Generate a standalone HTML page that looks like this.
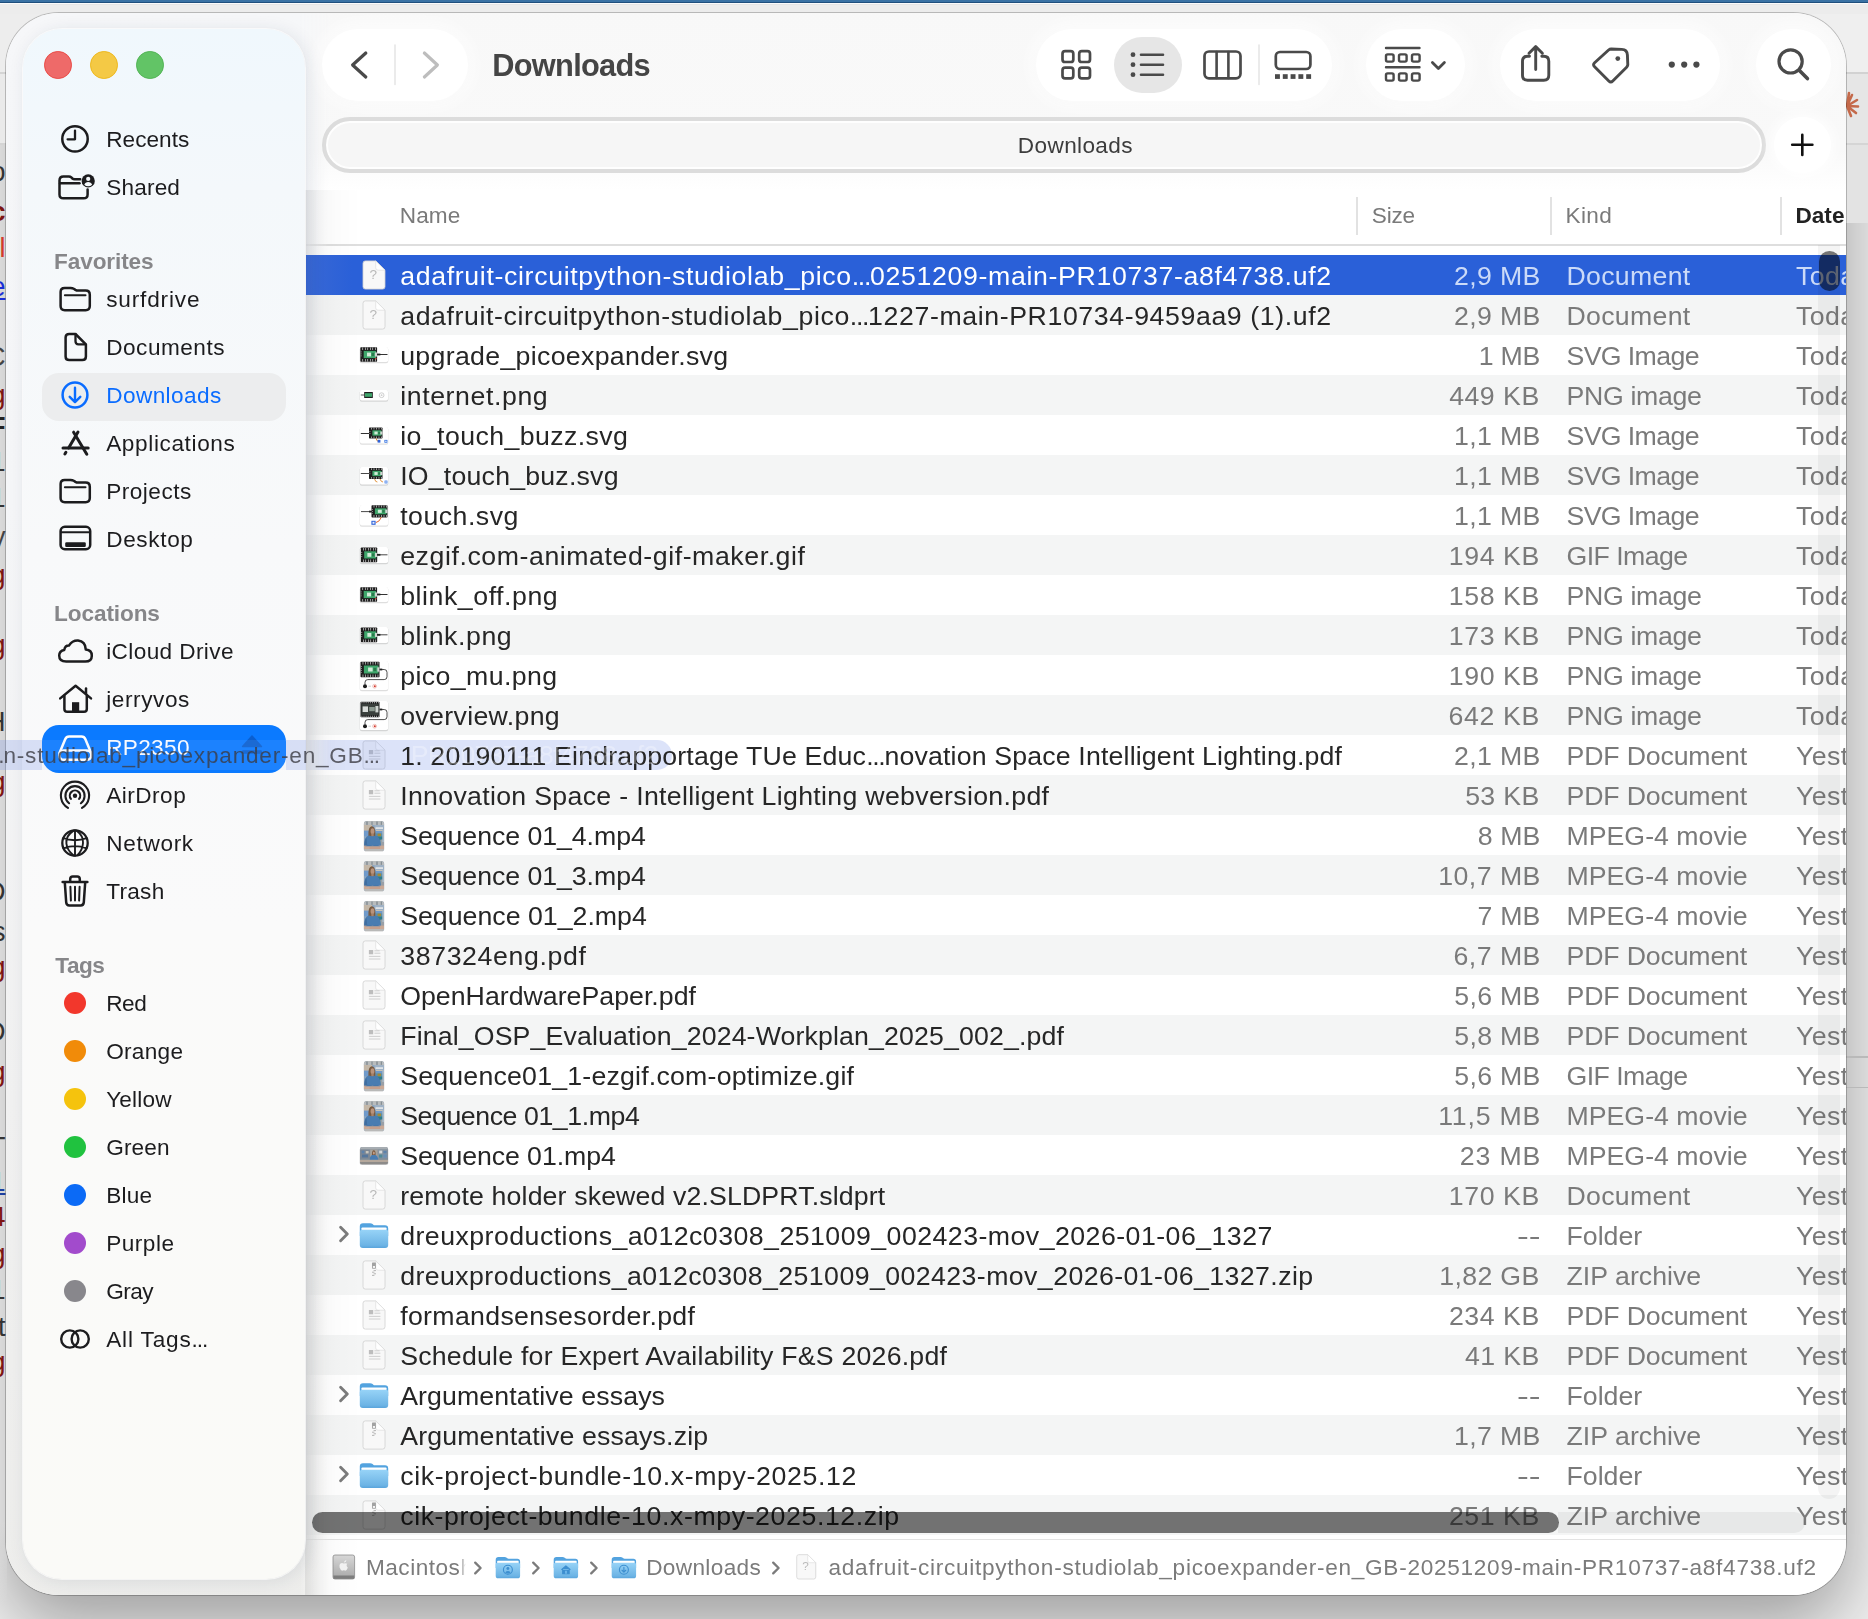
<!DOCTYPE html>
<html lang="en"><head><meta charset="utf-8"><title>Downloads</title>
<style>
html,body{margin:0;padding:0}
body{width:1868px;height:1619px;overflow:hidden;position:relative;background:#f0f0f0;font-family:'Liberation Sans',sans-serif}
.abs,.row,.selrow,.t,.fi,.si,.dot,.pill,.tb{position:absolute}
.t{white-space:pre;line-height:1;z-index:6}
.row{left:306px;width:1540px;height:40px;z-index:1}
.fi{z-index:5;line-height:0}
.si{left:55px;width:40px;height:40px;z-index:12;line-height:0}
.dot{left:64.300px;width:22px;height:22px;border-radius:50%;z-index:12}
.selrow{left:42px;width:244px;height:48px;border-radius:17px;z-index:11}
#win{z-index:1;position:absolute;left:6px;top:12.500px;width:1840px;height:1582.500px;border-radius:53px;overflow:hidden;background:#ffffff;box-shadow:0 0 0 1px rgba(0,0,0,0.22)}
#winshadow{position:absolute;left:6px;top:12.500px;width:1840px;height:1582.500px;border-radius:53px;box-shadow:0 30px 70px rgba(0,0,0,0.34)}
#pg{will-change:transform;position:absolute;left:-6px;top:-12.500px;width:1868px;height:1619px}
#tbbg{position:absolute;left:0;top:0;width:1868px;height:192px;background:linear-gradient(#f8f8f8 0,#f9f9f9 150px,#ffffff 190px);z-index:2}
#left{position:absolute;left:0;top:0;width:330px;height:1619px;background:linear-gradient(180deg,#f6f7f9 0,#f5f6f8 500px,#f1f1f1 1100px,#ededeb 1619px);-webkit-mask-image:linear-gradient(90deg,#000 300px,transparent 330px);mask-image:linear-gradient(90deg,#000 300px,transparent 330px);z-index:7}
#leftshade{position:absolute;left:305px;top:190px;width:57px;height:1429px;background:linear-gradient(90deg,rgba(0,0,0,0.075),rgba(0,0,0,0.03) 14px,rgba(0,0,0,0.012) 32px,rgba(0,0,0,0) 56px);z-index:7}
#leftshade2{position:absolute;left:306px;top:0;width:40px;height:190px;background:linear-gradient(90deg,rgba(20,40,70,0.032),rgba(0,0,0,0.010) 16px,rgba(0,0,0,0) 40px);z-index:7}
#sidebar{position:absolute;left:22.500px;top:29px;width:282.500px;height:1550px;border-radius:39px;z-index:10;background:linear-gradient(180deg,#f0f8fd 0,#f4f8fb 160px,#f8f9fa 520px,#fafafa 900px,#fafaf7 1550px);box-shadow:0 0 0 1px rgba(255,255,255,0.7),3px 2px 18px rgba(30,50,80,0.105),0 0 3px rgba(0,0,0,0.05)}
.tl{position:absolute;top:51px;width:25.600px;height:25.600px;border-radius:50%;border:1.200px solid;z-index:12}
.pill{background:#fff;border-radius:36px;z-index:8;box-shadow:0 0 18px 4px rgba(255,255,255,0.9),0 1px 10px rgba(0,0,0,0.035)}
.pathpill{position:absolute;left:322px;top:117px;width:1436px;height:48px;border-radius:28px;border:4px solid #dcdcdc;background:#f6f6f6;z-index:8;box-shadow:inset 0 0 0 2px rgba(255,255,255,0.85)}
.plus{position:absolute;left:1774px;top:116.700px;width:56.500px;height:56.500px;border-radius:50%;background:#fff;z-index:8;box-shadow:0 0 14px 3px rgba(255,255,255,0.9)}
.viewsel{position:absolute;left:1113.700px;top:36.700px;width:68.400px;height:56.200px;border-radius:28.100px;background:#e6e6e6;z-index:9}
.tb{left:0;top:0;z-index:12}
.hl{position:absolute;background:#dedede;z-index:3}
#vtrack{position:absolute;left:1818.200px;top:245px;width:21.800px;height:1253.500px;background:rgba(0,0,0,0.045);border-radius:0 0 11px 11px;z-index:8}
#vthumb{position:absolute;left:1819px;top:251px;width:20.600px;height:39.500px;border-radius:10.300px;background:rgba(0,0,0,0.52);z-index:9}
#htrack{position:absolute;left:1558px;top:1511.500px;width:247px;height:21px;background:rgba(0,0,0,0.05);border-radius:0 10.500px 10.500px 0;z-index:8}
#hthumb{position:absolute;left:312px;top:1511.500px;width:1247px;height:21px;border-radius:10.500px;background:rgba(0,0,0,0.535);z-index:9}
#pathbar{position:absolute;left:306px;top:1539px;width:1540px;height:58px;background:#fff;border-top:1.500px solid #e3e3e3;z-index:4}
#toplayer{position:absolute;left:0;top:0;width:1868px;height:1619px;z-index:50;will-change:transform;pointer-events:none}
.ghost{position:absolute;top:739.700px;height:30.600px;background:rgba(125,150,232,0.27)}
.bgt{position:absolute;white-space:pre;line-height:1}
</style></head>
<body>
<!-- desktop / background bits -->
<div class="abs" style="left:0;top:143px;width:7px;height:1476px;background:linear-gradient(180deg,#ffffff 0,#ffffff 1380px,#f0f0f0 1460px)"></div>
<div id="winshadow"></div>
<div class="abs" style="left:0;top:0;width:1868px;height:2.600px;background:#3a72a4"></div>
<div class="abs" style="left:0;top:2.200px;width:1868px;height:1px;background:#1f4f7d"></div>
<div class="abs" style="left:0;top:3.200px;width:1868px;height:1.300px;background:#fbfbfb"></div>
<div class="abs" style="left:0;top:4.500px;width:1868px;height:9px;background:#ececec"></div>
<div class="abs" style="left:0;top:100px;width:6.500px;height:1400px;overflow:hidden">
<span class="bgt" style="right:1px;top:59px;font-size:27px;color:#333;font-weight:400;">o</span>
<span class="bgt" style="right:1px;top:99px;font-size:27px;color:#7d1512;font-weight:700;">c</span>
<span class="bgt" style="right:1px;top:135px;font-size:27px;color:#d33a2c;font-weight:400;">l</span>
<span class="bgt" style="right:1px;top:174px;font-size:27px;color:#1b2fd6;font-weight:400;text-decoration:underline;">e</span>
<span class="bgt" style="right:1px;top:244px;font-size:27px;color:#444;font-weight:400;">C</span>
<span class="bgt" style="right:1px;top:282px;font-size:27px;color:#7d1512;font-weight:400;text-decoration:underline;">g</span>
<span class="bgt" style="right:1px;top:314px;font-size:27px;color:#222;font-weight:700;">F</span>
<span class="bgt" style="right:1px;top:349px;font-size:27px;color:#333;font-weight:400;">1</span>
<span class="bgt" style="right:1px;top:385px;font-size:27px;color:#333;font-weight:400;">1</span>
<span class="bgt" style="right:1px;top:424px;font-size:27px;color:#444;font-weight:400;">y</span>
<span class="bgt" style="right:1px;top:462px;font-size:27px;color:#7d1512;font-weight:400;text-decoration:underline;">g</span>
<span class="bgt" style="right:1px;top:532px;font-size:27px;color:#7d1512;font-weight:400;text-decoration:underline;">g</span>
<span class="bgt" style="right:1px;top:609px;font-size:27px;color:#333;font-weight:400;">H</span>
<span class="bgt" style="right:1px;top:669px;font-size:27px;color:#7d1512;font-weight:400;text-decoration:underline;">g</span>
<span class="bgt" style="right:1px;top:779px;font-size:27px;color:#333;font-weight:400;">D</span>
<span class="bgt" style="right:1px;top:819px;font-size:27px;color:#333;font-weight:400;">s</span>
<span class="bgt" style="right:1px;top:854px;font-size:27px;color:#7d1512;font-weight:400;text-decoration:underline;">g</span>
<span class="bgt" style="right:1px;top:919px;font-size:27px;color:#333;font-weight:400;">D</span>
<span class="bgt" style="right:1px;top:959px;font-size:27px;color:#7d1512;font-weight:400;text-decoration:underline;">g</span>
<span class="bgt" style="right:1px;top:1034px;font-size:27px;color:#333;font-weight:400;">T</span>
<span class="bgt" style="right:1px;top:1069px;font-size:27px;color:#1b3fa0;font-weight:400;text-decoration:underline;">1</span>
<span class="bgt" style="right:1px;top:1104px;font-size:27px;color:#7d1512;font-weight:400;">4</span>
<span class="bgt" style="right:1px;top:1141px;font-size:27px;color:#7d1512;font-weight:400;text-decoration:underline;">g</span>
<span class="bgt" style="right:1px;top:1177px;font-size:27px;color:#333;font-weight:400;">1</span>
<span class="bgt" style="right:1px;top:1214px;font-size:27px;color:#333;font-weight:400;">t</span>
<span class="bgt" style="right:1px;top:1249px;font-size:27px;color:#7d1512;font-weight:400;text-decoration:underline;">g</span>
</div>
<div class="abs" style="left:0;top:72px;width:8px;height:1.500px;background:#d4d4d4"></div>
<div class="abs" style="left:0;top:143px;width:8px;height:1.500px;background:#d4d4d4"></div>
<div class="abs" style="left:0;top:13.500px;width:60px;height:58.500px;background:#ededed"></div>
<div class="abs" style="left:0;top:73.500px;width:60px;height:69.500px;background:#eaeaea"></div>
<div class="abs" style="left:1780px;top:13.500px;width:88px;height:59px;background:#efefef"></div>
<div class="abs" style="left:1780px;top:72px;width:88px;height:1.500px;background:#d2d2d2"></div>
<div class="abs" style="left:1780px;top:73.500px;width:88px;height:70px;background:#e6e6e6"></div>
<div class="abs" style="left:1780px;top:143px;width:88px;height:1.500px;background:#d5d5d5"></div>
<div class="abs" style="left:1780px;top:144.500px;width:88px;height:78px;background:#e3e3e3"></div>
<div class="abs" style="left:1846px;top:1056px;width:22px;height:1.500px;background:#b9b9b9"></div>
<div class="abs" style="left:1846px;top:1086.500px;width:22px;height:1.500px;background:#b9b9b9"></div>
<svg class="abs" style="left:1838px;top:88px" width="30" height="36" viewBox="0 0 30 36" stroke="#c4694a" stroke-width="2.600" stroke-linecap="round"><path d="M9 18L19 12M9 18L20 18.500M9 18L18 25M9 18L13 28M9 18L14 7M9 18L11 5"/></svg>
<div id="win"><div id="pg">
<div id="tbbg"></div>
<div id="left"></div><div id="leftshade"></div><div class="abs" style="left:306px;top:255px;width:50px;height:40px;background:linear-gradient(90deg,#3968d4,#2a60d8 46px);z-index:7"></div>
<div class="hl" style="left:306px;top:244px;width:1540px;height:1.500px"></div>
<div class="hl" style="left:1356px;top:197px;width:1.500px;height:38px;background:#e2e2e2"></div>
<div class="hl" style="left:1550px;top:197px;width:1.500px;height:38px;background:#e2e2e2"></div>
<div class="hl" style="left:1780px;top:197px;width:1.500px;height:38px;background:#e2e2e2"></div>
<div class="row" style="top:255px;background:#2a60d8"></div>
<div class="fi" style="left:360.9px;top:259.0px"><svg width="26" height="32" viewBox="0 0 26 32"><path d="M4.600 2.600H15.200L23.600 11.000V27.600Q23.600 29.600 21.600 29.600H4.600Q2.600 29.600 2.600 27.600V4.600Q2.600 2.600 4.600 2.600Z" fill="#000" opacity="0.100"/><path d="M4.400 1.900H14.700L24.000 11.200V27.700Q24.000 30.100 21.600 30.100H4.400Q2.000 30.100 2.000 27.700V4.300Q2.000 1.900 4.400 1.900Z" fill="#f8f8f8" stroke="#d0d0d0" stroke-width="0.800"/><path d="M14.700 1.900V8.800Q14.700 11.200 17.100 11.200H24.000Z" fill="#ffffff" stroke="#dcdcdc" stroke-width="0.700" stroke-linejoin="round"/><text x="12.300" y="20.000" font-family="'Liberation Sans',sans-serif" font-size="13.600" fill="#b9b9b9" text-anchor="middle">?</text></svg></div>
<div class="row" style="top:295px;background:#f4f5f5"></div>
<div class="fi" style="left:360.9px;top:299.0px"><svg width="26" height="32" viewBox="0 0 26 32"><path d="M4.600 2.600H15.200L23.600 11.000V27.600Q23.600 29.600 21.600 29.600H4.600Q2.600 29.600 2.600 27.600V4.600Q2.600 2.600 4.600 2.600Z" fill="#000" opacity="0.100"/><path d="M4.400 1.900H14.700L24.000 11.200V27.700Q24.000 30.100 21.600 30.100H4.400Q2.000 30.100 2.000 27.700V4.300Q2.000 1.900 4.400 1.900Z" fill="#f8f8f8" stroke="#d0d0d0" stroke-width="0.800"/><path d="M14.700 1.900V8.800Q14.700 11.200 17.100 11.200H24.000Z" fill="#ffffff" stroke="#dcdcdc" stroke-width="0.700" stroke-linejoin="round"/><text x="12.300" y="20.000" font-family="'Liberation Sans',sans-serif" font-size="13.600" fill="#b9b9b9" text-anchor="middle">?</text></svg></div>
<div class="fi" style="left:359px;top:345.5px"><svg width="30" height="18" viewBox="-1 -1 30 18"><rect x="-0.3" y="0.300" width="28.6" height="15.9" rx="2.200" fill="#000" opacity="0.130"/><rect x="0" y="0" width="28" height="15" rx="1.800" fill="#ffffff"/><rect x="0.3" y="0.2" width="16.8" height="14.6" rx="0.7" fill="#1e1e1e"/><rect x="3.70" y="3.90" width="12.40" height="7.20" fill="#3fa66b"/><path d="M2.50 1.75H16.80M2.50 13.25H16.80" stroke="#ffffff" stroke-width="2.52" stroke-dasharray="0.55 1.95"/><path d="M1.20 4.70V10.30" stroke="#ffffff" stroke-width="1.000" stroke-dasharray="0.5 1.500"/><rect x="7.02" y="5.60" width="4.03" height="3.80" fill="#d3ecd9"/><rect x="11.72" y="6.04" width="2.35" height="2.92" fill="#2c7a4c"/><rect x="14.90" y="5.46" width="2.200" height="4.09" fill="#cfd6d1"/><path d="M17 7.500H27.500" stroke="#333" stroke-width="1.000"/><rect x="17" y="6.600" width="3.400" height="1.800" fill="#222"/><circle cx="15.800" cy="11.600" r="0.800" fill="#d9483a"/></svg></div>
<div class="row" style="top:375px;background:#f4f5f5"></div>
<div class="fi" style="left:359px;top:389.0px"><svg width="30" height="13.5" viewBox="-1 -1 30 13.5"><rect x="-0.3" y="0.300" width="28.6" height="11.4" rx="2.200" fill="#000" opacity="0.130"/><rect x="0" y="0" width="28" height="10.5" rx="1.800" fill="#ffffff"/><rect x="4.200" y="2.000" width="8.600" height="6.000" fill="#1f1f1f"/><rect x="5.000" y="3.200" width="7.000" height="3.600" fill="#3fa66b"/><path d="M0.800 5.000H4.200" stroke="#333" stroke-width="0.800"/><circle cx="21.600" cy="5.200" r="2.400" fill="none" stroke="#c9c9c9" stroke-width="0.900"/><circle cx="21.600" cy="5.200" r="0.900" fill="#cfcfcf"/></svg></div>
<div class="fi" style="left:359px;top:426.0px"><svg width="30" height="19.5" viewBox="-1 -1 30 19.5"><rect x="-0.3" y="0.300" width="28.6" height="17.4" rx="2.200" fill="#000" opacity="0.130"/><rect x="0" y="0" width="28" height="16.5" rx="1.800" fill="#ffffff"/><rect x="9.0" y="0.5" width="13.5" height="11" rx="0.7" fill="#1e1e1e"/><rect x="12.40" y="3.34" width="9.10" height="5.32" fill="#3fa66b"/><path d="M11.20 1.62H22.20M11.20 10.38H22.20" stroke="#ffffff" stroke-width="1.90" stroke-dasharray="0.55 1.95"/><path d="M9.90 4.14V7.86" stroke="#ffffff" stroke-width="1.000" stroke-dasharray="0.5 1.500"/><rect x="14.40" y="4.57" width="3.24" height="2.86" fill="#d3ecd9"/><rect x="18.18" y="4.90" width="1.89" height="2.20" fill="#2c7a4c"/><rect x="20.30" y="4.46" width="2.200" height="3.08" fill="#cfd6d1"/><path d="M0.800 6.500H9.000" stroke="#333" stroke-width="1.000"/><path d="M16.000 11.500Q17.000 15.000 19.500 14.600" stroke="#e08a2e" stroke-width="1.000" fill="none"/><rect x="17.600" y="12.800" width="2.800" height="2.800" fill="#2f62d9"/><rect x="24.400" y="12.900" width="3.000" height="2.800" fill="#2f6fe0"/><rect x="25.200" y="13.600" width="1.400" height="1.400" fill="#dfe9fb"/></svg></div>
<div class="row" style="top:455px;background:#f4f5f5"></div>
<div class="fi" style="left:359px;top:465.5px"><svg width="30" height="20.5" viewBox="-1 -1 30 20.5"><rect x="-0.3" y="0.300" width="28.6" height="18.4" rx="2.200" fill="#000" opacity="0.130"/><rect x="0" y="0" width="28" height="17.5" rx="1.800" fill="#ffffff"/><rect x="9.0" y="1.0" width="13.5" height="11" rx="0.7" fill="#1e1e1e"/><rect x="12.40" y="3.84" width="9.10" height="5.32" fill="#3fa66b"/><path d="M11.20 2.12H22.20M11.20 10.88H22.20" stroke="#ffffff" stroke-width="1.90" stroke-dasharray="0.55 1.95"/><path d="M9.90 4.64V8.36" stroke="#ffffff" stroke-width="1.000" stroke-dasharray="0.5 1.500"/><rect x="14.40" y="5.07" width="3.24" height="2.86" fill="#d3ecd9"/><rect x="18.18" y="5.40" width="1.89" height="2.20" fill="#2c7a4c"/><rect x="20.30" y="4.96" width="2.200" height="3.08" fill="#cfd6d1"/><path d="M0.800 6.500H9.000" stroke="#333" stroke-width="0.900"/><path d="M14.600 12.000Q15.400 15.200 17.400 15.000M20.000 12.000Q21.000 15.000 23.000 15.000" stroke="#e08a2e" stroke-width="0.900" fill="none"/><rect x="24.600" y="13.600" width="2.800" height="2.800" fill="#3b78e6"/><rect x="25.300" y="14.300" width="1.400" height="1.400" fill="#e4ecfb"/></svg></div>
<div class="fi" style="left:359px;top:504.0px"><svg width="30" height="23.5" viewBox="-1 -1 30 23.5"><rect x="-0.3" y="0.300" width="28.6" height="21.4" rx="2.200" fill="#000" opacity="0.130"/><rect x="0" y="0" width="28" height="20.5" rx="1.800" fill="#ffffff"/><rect x="11.5" y="0.2" width="16" height="12.2" rx="0.7" fill="#1e1e1e"/><rect x="14.90" y="3.33" width="11.60" height="5.94" fill="#3fa66b"/><path d="M13.70 1.46H27.20M13.70 11.14H27.20" stroke="#ffffff" stroke-width="2.11" stroke-dasharray="0.55 1.95"/><path d="M12.40 4.13V8.47" stroke="#ffffff" stroke-width="1.000" stroke-dasharray="0.5 1.500"/><rect x="17.90" y="4.71" width="3.84" height="3.17" fill="#d3ecd9"/><rect x="22.38" y="5.08" width="2.24" height="2.44" fill="#2c7a4c"/><rect x="25.30" y="4.59" width="2.200" height="3.42" fill="#cfd6d1"/><path d="M1.000 6.600H11.500" stroke="#333" stroke-width="0.900"/><rect x="9.000" y="5.700" width="2.800" height="1.800" fill="#222"/><path d="M21.500 12.000Q19.500 17.000 15.800 17.600" stroke="#e0662e" stroke-width="1.000" fill="none"/><rect x="11.400" y="15.800" width="4.200" height="4.000" fill="#2f62d9"/><rect x="12.500" y="16.800" width="2.000" height="1.900" fill="#e8effc"/></svg></div>
<div class="row" style="top:535px;background:#f4f5f5"></div>
<div class="fi" style="left:359px;top:546.2px"><svg width="30" height="19" viewBox="-1 -1 30 19"><rect x="-0.3" y="0.300" width="28.6" height="16.9" rx="2.200" fill="#000" opacity="0.130"/><rect x="0" y="0" width="28" height="16" rx="1.800" fill="#ffffff"/><rect x="0.8" y="0.6" width="16.4" height="14.6" rx="0.7" fill="#1e1e1e"/><rect x="4.20" y="4.30" width="12.00" height="7.20" fill="#3fa66b"/><path d="M3.00 2.15H16.90M3.00 13.65H16.90" stroke="#ffffff" stroke-width="2.52" stroke-dasharray="0.55 1.95"/><path d="M1.70 5.10V10.70" stroke="#ffffff" stroke-width="1.000" stroke-dasharray="0.5 1.500"/><rect x="7.36" y="6.00" width="3.94" height="3.80" fill="#d3ecd9"/><rect x="11.95" y="6.44" width="2.30" height="2.92" fill="#2c7a4c"/><rect x="15.00" y="5.86" width="2.200" height="4.09" fill="#cfd6d1"/><path d="M17.500 7.800H27.500" stroke="#333" stroke-width="0.900"/><rect x="17" y="6.900" width="3.400" height="1.800" fill="#222"/></svg></div>
<div class="fi" style="left:359px;top:585.5px"><svg width="30" height="18" viewBox="-1 -1 30 18"><rect x="-0.3" y="0.300" width="28.6" height="15.9" rx="2.200" fill="#000" opacity="0.130"/><rect x="0" y="0" width="28" height="15" rx="1.800" fill="#ffffff"/><rect x="0.3" y="0.2" width="16.8" height="14.6" rx="0.7" fill="#1e1e1e"/><rect x="3.70" y="3.90" width="12.40" height="7.20" fill="#3fa66b"/><path d="M2.50 1.75H16.80M2.50 13.25H16.80" stroke="#ffffff" stroke-width="2.52" stroke-dasharray="0.55 1.95"/><path d="M1.20 4.70V10.30" stroke="#ffffff" stroke-width="1.000" stroke-dasharray="0.5 1.500"/><rect x="7.02" y="5.60" width="4.03" height="3.80" fill="#d3ecd9"/><rect x="11.72" y="6.04" width="2.35" height="2.92" fill="#2c7a4c"/><rect x="14.90" y="5.46" width="2.200" height="4.09" fill="#cfd6d1"/><path d="M17 7.500H27.500" stroke="#333" stroke-width="1.000"/><rect x="17" y="6.600" width="3.400" height="1.800" fill="#222"/><circle cx="15.800" cy="11.600" r="0.800" fill="#d9483a"/></svg></div>
<div class="row" style="top:615px;background:#f4f5f5"></div>
<div class="fi" style="left:359px;top:626.2px"><svg width="30" height="19" viewBox="-1 -1 30 19"><rect x="-0.3" y="0.300" width="28.6" height="16.9" rx="2.200" fill="#000" opacity="0.130"/><rect x="0" y="0" width="28" height="16" rx="1.800" fill="#ffffff"/><rect x="0.8" y="0.6" width="16.4" height="14.6" rx="0.7" fill="#1e1e1e"/><rect x="4.20" y="4.30" width="12.00" height="7.20" fill="#3fa66b"/><path d="M3.00 2.15H16.90M3.00 13.65H16.90" stroke="#ffffff" stroke-width="2.52" stroke-dasharray="0.55 1.95"/><path d="M1.70 5.10V10.70" stroke="#ffffff" stroke-width="1.000" stroke-dasharray="0.5 1.500"/><rect x="7.36" y="6.00" width="3.94" height="3.80" fill="#d3ecd9"/><rect x="11.95" y="6.44" width="2.30" height="2.92" fill="#2c7a4c"/><rect x="15.00" y="5.86" width="2.200" height="4.09" fill="#cfd6d1"/><path d="M17.500 7.800H27.500" stroke="#333" stroke-width="0.900"/><rect x="17" y="6.900" width="3.400" height="1.800" fill="#222"/></svg></div>
<div class="fi" style="left:359px;top:659.5px"><svg width="30" height="32" viewBox="-1 -1 30 32"><rect x="-0.3" y="0.300" width="28.6" height="29.9" rx="2.200" fill="#000" opacity="0.130"/><rect x="0" y="0" width="28" height="29" rx="1.800" fill="#ffffff"/><rect x="0.5" y="0.8" width="19" height="15.4" rx="0.7" fill="#1e1e1e"/><rect x="3.90" y="4.50" width="14.60" height="8.00" fill="#3fa66b"/><path d="M2.70 2.35H19.20M2.70 14.65H19.20" stroke="#ffffff" stroke-width="2.52" stroke-dasharray="0.55 1.95"/><path d="M1.40 5.30V11.70" stroke="#ffffff" stroke-width="1.000" stroke-dasharray="0.5 1.500"/><rect x="8.10" y="6.50" width="4.56" height="4.00" fill="#d3ecd9"/><rect x="13.42" y="6.96" width="2.66" height="3.08" fill="#2c7a4c"/><rect x="17.30" y="6.34" width="2.200" height="4.31" fill="#cfd6d1"/><rect x="19.500" y="7.600" width="2.800" height="1.800" fill="#222"/><path d="M22.000 8.500H24.200Q27.000 8.500 27.000 11.300V15.800Q27.000 18.600 24.200 18.600H7.800Q5.000 18.600 5.000 21.400V23.600" stroke="#3a3a3a" stroke-width="0.900" fill="none"/><circle cx="5.000" cy="25.200" r="2.000" fill="#1c1c1c"/><circle cx="14.600" cy="25.200" r="1.900" fill="none" stroke="#e7a79f" stroke-width="0.700"/><circle cx="14.800" cy="25.200" r="1.000" fill="#d6372b"/><path d="M8.400 25.200H11.000" stroke="#bbb" stroke-width="0.700"/></svg></div>
<div class="row" style="top:695px;background:#f4f5f5"></div>
<div class="fi" style="left:359px;top:699.5px"><svg width="30" height="32" viewBox="-1 -1 30 32"><rect x="-0.3" y="0.300" width="28.6" height="29.9" rx="2.200" fill="#000" opacity="0.130"/><rect x="0" y="0" width="28" height="29" rx="1.800" fill="#ffffff"/><rect x="0.500" y="0.800" width="19" height="15.400" rx="0.800" fill="#1f1f1f"/><path d="M1.500 1.700H19M1.500 15.300H19" stroke="#e9e9e9" stroke-width="1.100" stroke-dasharray="0.8 1.300"/><rect x="1.300" y="3.000" width="17.400" height="11.000" fill="#3a3f3c"/><rect x="2.600" y="5.400" width="5.400" height="5.600" fill="#d9dcda"/><rect x="9.200" y="6.000" width="5.600" height="4.200" fill="#8d9a91"/><rect x="15.400" y="5.000" width="3.000" height="6.400" fill="#cfd4d0"/><rect x="19.500" y="7.600" width="2.800" height="1.800" fill="#222"/><path d="M22.000 8.500H24.200Q27.000 8.500 27.000 11.300V15.800Q27.000 18.600 24.200 18.600H7.800Q5.000 18.600 5.000 21.400V23.600" stroke="#3a3a3a" stroke-width="0.900" fill="none"/><circle cx="5.000" cy="25.200" r="2.000" fill="#1c1c1c"/><circle cx="14.600" cy="25.200" r="1.900" fill="none" stroke="#e7a79f" stroke-width="0.700"/><circle cx="14.800" cy="25.200" r="1.000" fill="#d6372b"/><path d="M8.400 25.200H11.000" stroke="#bbb" stroke-width="0.700"/></svg></div>
<div class="fi" style="left:360.7px;top:738.8px"><svg width="26" height="32" viewBox="0 0 26 32"><path d="M4.600 2.600H15.200L23.600 11.000V27.600Q23.600 29.600 21.600 29.600H4.600Q2.600 29.600 2.600 27.600V4.600Q2.600 2.600 4.600 2.600Z" fill="#000" opacity="0.100"/><path d="M4.400 1.900H14.700L24.000 11.200V27.700Q24.000 30.100 21.600 30.100H4.400Q2.000 30.100 2.000 27.700V4.300Q2.000 1.900 4.400 1.900Z" fill="#f8f8f8" stroke="#d0d0d0" stroke-width="0.800"/><path d="M14.700 1.900V8.800Q14.700 11.200 17.100 11.200H24.000Z" fill="#ffffff" stroke="#dcdcdc" stroke-width="0.700" stroke-linejoin="round"/><rect x="7.900" y="11.000" width="4.300" height="4.300" fill="#bdbdbd"/><path d="M13.400 11.800H18.600M13.400 14.200H19.400M7.900 17.400H19.400M7.900 20.000H19.400" stroke="#cbcbcb" stroke-width="0.900"/></svg></div>
<div class="row" style="top:775px;background:#f4f5f5"></div>
<div class="fi" style="left:360.7px;top:778.8px"><svg width="26" height="32" viewBox="0 0 26 32"><path d="M4.600 2.600H15.200L23.600 11.000V27.600Q23.600 29.600 21.600 29.600H4.600Q2.600 29.600 2.600 27.600V4.600Q2.600 2.600 4.600 2.600Z" fill="#000" opacity="0.100"/><path d="M4.400 1.900H14.700L24.000 11.200V27.700Q24.000 30.100 21.600 30.100H4.400Q2.000 30.100 2.000 27.700V4.300Q2.000 1.900 4.400 1.900Z" fill="#f8f8f8" stroke="#d0d0d0" stroke-width="0.800"/><path d="M14.700 1.900V8.800Q14.700 11.200 17.100 11.200H24.000Z" fill="#ffffff" stroke="#dcdcdc" stroke-width="0.700" stroke-linejoin="round"/><rect x="7.900" y="11.000" width="4.300" height="4.300" fill="#bdbdbd"/><path d="M13.400 11.800H18.600M13.400 14.200H19.400M7.900 17.400H19.400M7.900 20.000H19.400" stroke="#cbcbcb" stroke-width="0.900"/></svg></div>
<div class="fi" style="left:363px;top:819.9px"><svg width="22" height="32" viewBox="-1 -1 22 32"><defs><clipPath id="vp1"><rect x="0" y="0" width="20" height="30" rx="2.600"/></clipPath><filter id="vb1" x="-20%" y="-20%" width="140%" height="140%"><feGaussianBlur stdDeviation="0.550"/></filter></defs><rect x="-0.300" y="0.400" width="20.600" height="30.200" rx="2.800" fill="#000" opacity="0.200"/><g clip-path="url(#vp1)"><rect width="20" height="30" fill="#8aa3bd"/><g filter="url(#vb1)"><rect x="-1" y="-1" width="22" height="5.200" fill="#b9bcbd"/><rect x="2.500" y="0.500" width="1.000" height="3.400" fill="#6d7780"/><rect x="7.500" y="0.500" width="1.000" height="3.400" fill="#77818a"/><rect x="12.500" y="0.500" width="1.000" height="3.400" fill="#6d7780"/><rect x="16.800" y="0.500" width="1.000" height="3.400" fill="#7b858d"/><rect x="-1" y="4.000" width="9.000" height="6.000" fill="#c3b7a8"/><rect x="10.500" y="4.000" width="10.500" height="5.000" fill="#9fb2c6"/><rect x="11.500" y="6.200" width="7.500" height="1.800" fill="#dfe3e6"/><rect x="-1" y="9.600" width="22" height="5.600" fill="#6f9aca"/><rect x="12.000" y="9.000" width="9.000" height="1.000" fill="#c9c2b4"/><rect x="11.500" y="12.400" width="9.500" height="13.000" fill="#5d8fa5"/><rect x="13.600" y="12.600" width="3.400" height="2.600" fill="#a58a35"/><rect x="13.000" y="15.600" width="6.000" height="3.400" fill="#2f7c8c"/><rect x="16.500" y="18.500" width="4.000" height="7.000" fill="#9aa0a6"/><rect x="18.300" y="9.000" width="2.000" height="12.000" fill="#aab9c7"/><path d="M4.400 15.400Q4.000 5.400 7.800 5.300Q11.800 5.200 11.400 15.400Z" fill="#7a5a3f"/><ellipse cx="8.500" cy="10.200" rx="1.900" ry="3.000" fill="#b9937c"/><rect x="7.300" y="12.400" width="2.400" height="2.600" fill="#a8836d"/><path d="M0.200 26.000Q-0.200 15.600 5.000 14.600L8.300 15.600L11.400 14.600Q15.400 15.600 16.600 22.000L17.200 26.000Z" fill="#4a7cb1"/><path d="M0.300 25.500Q0.500 19.000 2.400 16.500L3.400 25.500Z" fill="#3f6d9f"/><rect x="-1" y="24.600" width="22" height="4.000" fill="#caa996"/><rect x="5.500" y="25.600" width="10.500" height="2.400" fill="#c49f8c"/><rect x="-1" y="28.000" width="22" height="3.000" fill="#b9b9b8"/><path d="M1.000 25.200Q5.000 22.800 8.500 24.600Q12.000 22.800 16.400 25.200Z" fill="#4577ac"/></g></g></svg></div>
<div class="row" style="top:855px;background:#f4f5f5"></div>
<div class="fi" style="left:363px;top:859.9px"><svg width="22" height="32" viewBox="-1 -1 22 32"><defs><clipPath id="vp2"><rect x="0" y="0" width="20" height="30" rx="2.600"/></clipPath><filter id="vb2" x="-20%" y="-20%" width="140%" height="140%"><feGaussianBlur stdDeviation="0.550"/></filter></defs><rect x="-0.300" y="0.400" width="20.600" height="30.200" rx="2.800" fill="#000" opacity="0.200"/><g clip-path="url(#vp2)"><rect width="20" height="30" fill="#8aa3bd"/><g filter="url(#vb2)"><rect x="-1" y="-1" width="22" height="5.200" fill="#b9bcbd"/><rect x="2.500" y="0.500" width="1.000" height="3.400" fill="#6d7780"/><rect x="7.500" y="0.500" width="1.000" height="3.400" fill="#77818a"/><rect x="12.500" y="0.500" width="1.000" height="3.400" fill="#6d7780"/><rect x="16.800" y="0.500" width="1.000" height="3.400" fill="#7b858d"/><rect x="-1" y="4.000" width="9.000" height="6.000" fill="#c3b7a8"/><rect x="10.500" y="4.000" width="10.500" height="5.000" fill="#9fb2c6"/><rect x="11.500" y="6.200" width="7.500" height="1.800" fill="#dfe3e6"/><rect x="-1" y="9.600" width="22" height="5.600" fill="#6f9aca"/><rect x="12.000" y="9.000" width="9.000" height="1.000" fill="#c9c2b4"/><rect x="11.500" y="12.400" width="9.500" height="13.000" fill="#5d8fa5"/><rect x="13.600" y="12.600" width="3.400" height="2.600" fill="#a58a35"/><rect x="13.000" y="15.600" width="6.000" height="3.400" fill="#2f7c8c"/><rect x="16.500" y="18.500" width="4.000" height="7.000" fill="#9aa0a6"/><rect x="18.300" y="9.000" width="2.000" height="12.000" fill="#aab9c7"/><path d="M4.400 15.400Q4.000 5.400 7.800 5.300Q11.800 5.200 11.400 15.400Z" fill="#7a5a3f"/><ellipse cx="8.500" cy="10.200" rx="1.900" ry="3.000" fill="#b9937c"/><rect x="7.300" y="12.400" width="2.400" height="2.600" fill="#a8836d"/><path d="M0.200 26.000Q-0.200 15.600 5.000 14.600L8.300 15.600L11.400 14.600Q15.400 15.600 16.600 22.000L17.200 26.000Z" fill="#4a7cb1"/><path d="M0.300 25.500Q0.500 19.000 2.400 16.500L3.400 25.500Z" fill="#3f6d9f"/><rect x="-1" y="24.600" width="22" height="4.000" fill="#caa996"/><rect x="5.500" y="25.600" width="10.500" height="2.400" fill="#c49f8c"/><rect x="-1" y="28.000" width="22" height="3.000" fill="#b9b9b8"/><path d="M1.000 25.200Q5.000 22.800 8.500 24.600Q12.000 22.800 16.400 25.200Z" fill="#4577ac"/></g></g></svg></div>
<div class="fi" style="left:363px;top:899.9px"><svg width="22" height="32" viewBox="-1 -1 22 32"><defs><clipPath id="vp3"><rect x="0" y="0" width="20" height="30" rx="2.600"/></clipPath><filter id="vb3" x="-20%" y="-20%" width="140%" height="140%"><feGaussianBlur stdDeviation="0.550"/></filter></defs><rect x="-0.300" y="0.400" width="20.600" height="30.200" rx="2.800" fill="#000" opacity="0.200"/><g clip-path="url(#vp3)"><rect width="20" height="30" fill="#8aa3bd"/><g filter="url(#vb3)"><rect x="-1" y="-1" width="22" height="5.200" fill="#b9bcbd"/><rect x="2.500" y="0.500" width="1.000" height="3.400" fill="#6d7780"/><rect x="7.500" y="0.500" width="1.000" height="3.400" fill="#77818a"/><rect x="12.500" y="0.500" width="1.000" height="3.400" fill="#6d7780"/><rect x="16.800" y="0.500" width="1.000" height="3.400" fill="#7b858d"/><rect x="-1" y="4.000" width="9.000" height="6.000" fill="#c3b7a8"/><rect x="10.500" y="4.000" width="10.500" height="5.000" fill="#9fb2c6"/><rect x="11.500" y="6.200" width="7.500" height="1.800" fill="#dfe3e6"/><rect x="-1" y="9.600" width="22" height="5.600" fill="#6f9aca"/><rect x="12.000" y="9.000" width="9.000" height="1.000" fill="#c9c2b4"/><rect x="11.500" y="12.400" width="9.500" height="13.000" fill="#5d8fa5"/><rect x="13.600" y="12.600" width="3.400" height="2.600" fill="#a58a35"/><rect x="13.000" y="15.600" width="6.000" height="3.400" fill="#2f7c8c"/><rect x="16.500" y="18.500" width="4.000" height="7.000" fill="#9aa0a6"/><rect x="18.300" y="9.000" width="2.000" height="12.000" fill="#aab9c7"/><path d="M4.400 15.400Q4.000 5.400 7.800 5.300Q11.800 5.200 11.400 15.400Z" fill="#7a5a3f"/><ellipse cx="8.500" cy="10.200" rx="1.900" ry="3.000" fill="#b9937c"/><rect x="7.300" y="12.400" width="2.400" height="2.600" fill="#a8836d"/><path d="M0.200 26.000Q-0.200 15.600 5.000 14.600L8.300 15.600L11.400 14.600Q15.400 15.600 16.600 22.000L17.200 26.000Z" fill="#4a7cb1"/><path d="M0.300 25.500Q0.500 19.000 2.400 16.500L3.400 25.500Z" fill="#3f6d9f"/><rect x="-1" y="24.600" width="22" height="4.000" fill="#caa996"/><rect x="5.500" y="25.600" width="10.500" height="2.400" fill="#c49f8c"/><rect x="-1" y="28.000" width="22" height="3.000" fill="#b9b9b8"/><path d="M1.000 25.200Q5.000 22.800 8.500 24.600Q12.000 22.800 16.400 25.200Z" fill="#4577ac"/></g></g></svg></div>
<div class="row" style="top:935px;background:#f4f5f5"></div>
<div class="fi" style="left:360.7px;top:938.8px"><svg width="26" height="32" viewBox="0 0 26 32"><path d="M4.600 2.600H15.200L23.600 11.000V27.600Q23.600 29.600 21.600 29.600H4.600Q2.600 29.600 2.600 27.600V4.600Q2.600 2.600 4.600 2.600Z" fill="#000" opacity="0.100"/><path d="M4.400 1.900H14.700L24.000 11.200V27.700Q24.000 30.100 21.600 30.100H4.400Q2.000 30.100 2.000 27.700V4.300Q2.000 1.900 4.400 1.900Z" fill="#f8f8f8" stroke="#d0d0d0" stroke-width="0.800"/><path d="M14.700 1.900V8.800Q14.700 11.200 17.100 11.200H24.000Z" fill="#ffffff" stroke="#dcdcdc" stroke-width="0.700" stroke-linejoin="round"/><rect x="7.900" y="11.000" width="4.300" height="4.300" fill="#bdbdbd"/><path d="M13.400 11.800H18.600M13.400 14.200H19.400M7.900 17.400H19.400M7.900 20.000H19.400" stroke="#cbcbcb" stroke-width="0.900"/></svg></div>
<div class="fi" style="left:360.7px;top:978.8px"><svg width="26" height="32" viewBox="0 0 26 32"><path d="M4.600 2.600H15.200L23.600 11.000V27.600Q23.600 29.600 21.600 29.600H4.600Q2.600 29.600 2.600 27.600V4.600Q2.600 2.600 4.600 2.600Z" fill="#000" opacity="0.100"/><path d="M4.400 1.900H14.700L24.000 11.200V27.700Q24.000 30.100 21.600 30.100H4.400Q2.000 30.100 2.000 27.700V4.300Q2.000 1.900 4.400 1.900Z" fill="#f8f8f8" stroke="#d0d0d0" stroke-width="0.800"/><path d="M14.700 1.900V8.800Q14.700 11.200 17.100 11.200H24.000Z" fill="#ffffff" stroke="#dcdcdc" stroke-width="0.700" stroke-linejoin="round"/><rect x="7.900" y="11.000" width="4.300" height="4.300" fill="#bdbdbd"/><path d="M13.400 11.800H18.600M13.400 14.200H19.400M7.900 17.400H19.400M7.900 20.000H19.400" stroke="#cbcbcb" stroke-width="0.900"/></svg></div>
<div class="row" style="top:1015px;background:#f4f5f5"></div>
<div class="fi" style="left:360.7px;top:1018.8px"><svg width="26" height="32" viewBox="0 0 26 32"><path d="M4.600 2.600H15.200L23.600 11.000V27.600Q23.600 29.600 21.600 29.600H4.600Q2.600 29.600 2.600 27.600V4.600Q2.600 2.600 4.600 2.600Z" fill="#000" opacity="0.100"/><path d="M4.400 1.900H14.700L24.000 11.200V27.700Q24.000 30.100 21.600 30.100H4.400Q2.000 30.100 2.000 27.700V4.300Q2.000 1.900 4.400 1.900Z" fill="#f8f8f8" stroke="#d0d0d0" stroke-width="0.800"/><path d="M14.700 1.900V8.800Q14.700 11.200 17.100 11.200H24.000Z" fill="#ffffff" stroke="#dcdcdc" stroke-width="0.700" stroke-linejoin="round"/><rect x="7.900" y="11.000" width="4.300" height="4.300" fill="#bdbdbd"/><path d="M13.400 11.800H18.600M13.400 14.200H19.400M7.900 17.400H19.400M7.900 20.000H19.400" stroke="#cbcbcb" stroke-width="0.900"/></svg></div>
<div class="fi" style="left:363px;top:1059.9px"><svg width="22" height="32" viewBox="-1 -1 22 32"><defs><clipPath id="vp4"><rect x="0" y="0" width="20" height="30" rx="2.600"/></clipPath><filter id="vb4" x="-20%" y="-20%" width="140%" height="140%"><feGaussianBlur stdDeviation="0.550"/></filter></defs><rect x="-0.300" y="0.400" width="20.600" height="30.200" rx="2.800" fill="#000" opacity="0.200"/><g clip-path="url(#vp4)"><rect width="20" height="30" fill="#8aa3bd"/><g filter="url(#vb4)"><rect x="-1" y="-1" width="22" height="5.200" fill="#b9bcbd"/><rect x="2.500" y="0.500" width="1.000" height="3.400" fill="#6d7780"/><rect x="7.500" y="0.500" width="1.000" height="3.400" fill="#77818a"/><rect x="12.500" y="0.500" width="1.000" height="3.400" fill="#6d7780"/><rect x="16.800" y="0.500" width="1.000" height="3.400" fill="#7b858d"/><rect x="-1" y="4.000" width="9.000" height="6.000" fill="#c3b7a8"/><rect x="10.500" y="4.000" width="10.500" height="5.000" fill="#9fb2c6"/><rect x="11.500" y="6.200" width="7.500" height="1.800" fill="#dfe3e6"/><rect x="-1" y="9.600" width="22" height="5.600" fill="#6f9aca"/><rect x="12.000" y="9.000" width="9.000" height="1.000" fill="#c9c2b4"/><rect x="11.500" y="12.400" width="9.500" height="13.000" fill="#5d8fa5"/><rect x="13.600" y="12.600" width="3.400" height="2.600" fill="#a58a35"/><rect x="13.000" y="15.600" width="6.000" height="3.400" fill="#2f7c8c"/><rect x="16.500" y="18.500" width="4.000" height="7.000" fill="#9aa0a6"/><rect x="18.300" y="9.000" width="2.000" height="12.000" fill="#aab9c7"/><path d="M4.400 15.400Q4.000 5.400 7.800 5.300Q11.800 5.200 11.400 15.400Z" fill="#7a5a3f"/><ellipse cx="8.500" cy="10.200" rx="1.900" ry="3.000" fill="#b9937c"/><rect x="7.300" y="12.400" width="2.400" height="2.600" fill="#a8836d"/><path d="M0.200 26.000Q-0.200 15.600 5.000 14.600L8.300 15.600L11.400 14.600Q15.400 15.600 16.600 22.000L17.200 26.000Z" fill="#4a7cb1"/><path d="M0.300 25.500Q0.500 19.000 2.400 16.500L3.400 25.500Z" fill="#3f6d9f"/><rect x="-1" y="24.600" width="22" height="4.000" fill="#caa996"/><rect x="5.500" y="25.600" width="10.500" height="2.400" fill="#c49f8c"/><rect x="-1" y="28.000" width="22" height="3.000" fill="#b9b9b8"/><path d="M1.000 25.200Q5.000 22.800 8.500 24.600Q12.000 22.800 16.400 25.200Z" fill="#4577ac"/></g></g></svg></div>
<div class="row" style="top:1095px;background:#f4f5f5"></div>
<div class="fi" style="left:363px;top:1099.9px"><svg width="22" height="32" viewBox="-1 -1 22 32"><defs><clipPath id="vp5"><rect x="0" y="0" width="20" height="30" rx="2.600"/></clipPath><filter id="vb5" x="-20%" y="-20%" width="140%" height="140%"><feGaussianBlur stdDeviation="0.550"/></filter></defs><rect x="-0.300" y="0.400" width="20.600" height="30.200" rx="2.800" fill="#000" opacity="0.200"/><g clip-path="url(#vp5)"><rect width="20" height="30" fill="#8aa3bd"/><g filter="url(#vb5)"><rect x="-1" y="-1" width="22" height="5.200" fill="#b9bcbd"/><rect x="2.500" y="0.500" width="1.000" height="3.400" fill="#6d7780"/><rect x="7.500" y="0.500" width="1.000" height="3.400" fill="#77818a"/><rect x="12.500" y="0.500" width="1.000" height="3.400" fill="#6d7780"/><rect x="16.800" y="0.500" width="1.000" height="3.400" fill="#7b858d"/><rect x="-1" y="4.000" width="9.000" height="6.000" fill="#c3b7a8"/><rect x="10.500" y="4.000" width="10.500" height="5.000" fill="#9fb2c6"/><rect x="11.500" y="6.200" width="7.500" height="1.800" fill="#dfe3e6"/><rect x="-1" y="9.600" width="22" height="5.600" fill="#6f9aca"/><rect x="12.000" y="9.000" width="9.000" height="1.000" fill="#c9c2b4"/><rect x="11.500" y="12.400" width="9.500" height="13.000" fill="#5d8fa5"/><rect x="13.600" y="12.600" width="3.400" height="2.600" fill="#a58a35"/><rect x="13.000" y="15.600" width="6.000" height="3.400" fill="#2f7c8c"/><rect x="16.500" y="18.500" width="4.000" height="7.000" fill="#9aa0a6"/><rect x="18.300" y="9.000" width="2.000" height="12.000" fill="#aab9c7"/><path d="M4.400 15.400Q4.000 5.400 7.800 5.300Q11.800 5.200 11.400 15.400Z" fill="#7a5a3f"/><ellipse cx="8.500" cy="10.200" rx="1.900" ry="3.000" fill="#b9937c"/><rect x="7.300" y="12.400" width="2.400" height="2.600" fill="#a8836d"/><path d="M0.200 26.000Q-0.200 15.600 5.000 14.600L8.300 15.600L11.400 14.600Q15.400 15.600 16.600 22.000L17.200 26.000Z" fill="#4a7cb1"/><path d="M0.300 25.500Q0.500 19.000 2.400 16.500L3.400 25.500Z" fill="#3f6d9f"/><rect x="-1" y="24.600" width="22" height="4.000" fill="#caa996"/><rect x="5.500" y="25.600" width="10.500" height="2.400" fill="#c49f8c"/><rect x="-1" y="28.000" width="22" height="3.000" fill="#b9b9b8"/><path d="M1.000 25.200Q5.000 22.800 8.500 24.600Q12.000 22.800 16.400 25.200Z" fill="#4577ac"/></g></g></svg></div>
<div class="fi" style="left:359px;top:1145.8px"><svg width="30" height="20" viewBox="-1 -1 30 20"><defs><clipPath id="vl1"><rect x="0" y="0" width="28" height="17.300" rx="2.400"/></clipPath><filter id="vlb" x="-20%" y="-20%" width="140%" height="140%"><feGaussianBlur stdDeviation="0.500"/></filter></defs><rect x="-0.300" y="0.400" width="28.600" height="17.600" rx="2.600" fill="#000" opacity="0.220"/><g clip-path="url(#vl1)"><rect width="28" height="17.300" fill="#7f8b98"/><g filter="url(#vlb)"><rect x="-1" y="-1" width="30" height="3.400" fill="#a7adb2"/><rect x="0.500" y="2.800" width="9.000" height="8.600" fill="#7d8793"/><rect x="1.600" y="3.600" width="2.800" height="2.800" fill="#5d82ab"/><rect x="5.800" y="4.000" width="2.800" height="2.400" fill="#c9c6bd"/><rect x="2.000" y="7.600" width="6.000" height="2.800" fill="#54779d"/><rect x="18.000" y="2.800" width="9.600" height="8.600" fill="#8794a1"/><rect x="19.200" y="3.600" width="3.000" height="2.800" fill="#d5d7d8"/><rect x="23.400" y="3.800" width="3.200" height="2.600" fill="#5d82ab"/><rect x="19.000" y="7.600" width="3.400" height="3.000" fill="#4f8a96"/><rect x="23.200" y="7.400" width="3.600" height="3.200" fill="#6a8fb5"/><rect x="10.200" y="2.600" width="7.400" height="8.000" fill="#a8a39b"/><path d="M11.900 8.600Q11.700 3.400 13.700 3.300Q15.900 3.300 15.600 8.600Z" fill="#7a5a3f"/><ellipse cx="13.800" cy="5.900" rx="1.000" ry="1.500" fill="#c19b84"/><path d="M9.800 13.600Q9.600 8.600 12.400 8.100H15.200Q18.000 8.600 18.200 13.600Z" fill="#4a7cb1"/><rect x="-1" y="12.800" width="30" height="2.600" fill="#b5a89c"/><rect x="-1" y="15.000" width="30" height="3.000" fill="#8d8b89"/></g></g></svg></div>
<div class="row" style="top:1175px;background:#f4f5f5"></div>
<div class="fi" style="left:360.9px;top:1179.0px"><svg width="26" height="32" viewBox="0 0 26 32"><path d="M4.600 2.600H15.200L23.600 11.000V27.600Q23.600 29.600 21.600 29.600H4.600Q2.600 29.600 2.600 27.600V4.600Q2.600 2.600 4.600 2.600Z" fill="#000" opacity="0.100"/><path d="M4.400 1.900H14.700L24.000 11.200V27.700Q24.000 30.100 21.600 30.100H4.400Q2.000 30.100 2.000 27.700V4.300Q2.000 1.900 4.400 1.900Z" fill="#f8f8f8" stroke="#d0d0d0" stroke-width="0.800"/><path d="M14.700 1.900V8.800Q14.700 11.200 17.100 11.200H24.000Z" fill="#ffffff" stroke="#dcdcdc" stroke-width="0.700" stroke-linejoin="round"/><text x="12.300" y="20.000" font-family="'Liberation Sans',sans-serif" font-size="13.600" fill="#b9b9b9" text-anchor="middle">?</text></svg></div>
<div class="fi" style="left:359.0px;top:1221.5px"><svg width="30" height="27" viewBox="0 0 30 27"><defs><linearGradient id="fgr1" x1="0" y1="0" x2="0" y2="1"><stop offset="0" stop-color="#97d3f7"/><stop offset="0.850" stop-color="#6db4e5"/><stop offset="1" stop-color="#5aa5dc"/></linearGradient></defs><path d="M0.800 4.400Q0.800 1.200 4.000 1.200H11.000Q12.600 1.200 13.600 2.100L14.300 2.700Q14.900 3.200 15.800 3.200H26.000Q29.200 3.200 29.200 6.400V14H0.800Z" fill="#53a3df"/><rect x="2.500" y="5.400" width="25" height="5" rx="0.900" fill="#ffffff"/><path d="M0.800 10.000Q0.800 7.800 3.000 7.800H27.000Q29.200 7.800 29.200 10.000V22.900Q29.200 25.900 26.200 25.900H3.800Q0.800 25.900 0.800 22.900Z" fill="url(#fgr1)"/></svg></div>
<svg class="fi" style="left:337px;top:1224.3px" width="14" height="20" viewBox="0 0 14 20" fill="none" stroke="#7b7b7b" stroke-width="2.900" stroke-linecap="round" stroke-linejoin="round"><path d="M3.600 3.300L10.300 10.000L3.600 16.700"/></svg>
<div class="row" style="top:1255px;background:#f4f5f5"></div>
<div class="fi" style="left:360.7px;top:1258.8px"><svg width="26" height="32" viewBox="0 0 26 32"><path d="M4.600 2.600H15.200L23.600 11.000V27.600Q23.600 29.600 21.600 29.600H4.600Q2.600 29.600 2.600 27.600V4.600Q2.600 2.600 4.600 2.600Z" fill="#000" opacity="0.100"/><path d="M4.400 1.900H14.700L24.000 11.200V27.700Q24.000 30.100 21.600 30.100H4.400Q2.000 30.100 2.000 27.700V4.300Q2.000 1.900 4.400 1.900Z" fill="#f8f8f8" stroke="#d0d0d0" stroke-width="0.800"/><path d="M14.700 1.900V8.800Q14.700 11.200 17.100 11.200H24.000Z" fill="#ffffff" stroke="#dcdcdc" stroke-width="0.700" stroke-linejoin="round"/><rect x="11.000" y="3.400" width="3.900" height="6.400" rx="0.700" fill="#a2a2a2"/><rect x="11.900" y="7.000" width="2.100" height="1.900" fill="#f6f6f6"/><path d="M12.600 11.600H15.000M11.000 13.200H13.400M12.600 14.800H15.000M11.000 16.400H13.400" stroke="#adadad" stroke-width="0.900"/></svg></div>
<div class="fi" style="left:360.7px;top:1298.8px"><svg width="26" height="32" viewBox="0 0 26 32"><path d="M4.600 2.600H15.200L23.600 11.000V27.600Q23.600 29.600 21.600 29.600H4.600Q2.600 29.600 2.600 27.600V4.600Q2.600 2.600 4.600 2.600Z" fill="#000" opacity="0.100"/><path d="M4.400 1.900H14.700L24.000 11.200V27.700Q24.000 30.100 21.600 30.100H4.400Q2.000 30.100 2.000 27.700V4.300Q2.000 1.900 4.400 1.900Z" fill="#f8f8f8" stroke="#d0d0d0" stroke-width="0.800"/><path d="M14.700 1.900V8.800Q14.700 11.200 17.100 11.200H24.000Z" fill="#ffffff" stroke="#dcdcdc" stroke-width="0.700" stroke-linejoin="round"/><rect x="7.900" y="11.000" width="4.300" height="4.300" fill="#bdbdbd"/><path d="M13.400 11.800H18.600M13.400 14.200H19.400M7.900 17.400H19.400M7.900 20.000H19.400" stroke="#cbcbcb" stroke-width="0.900"/></svg></div>
<div class="row" style="top:1335px;background:#f4f5f5"></div>
<div class="fi" style="left:360.7px;top:1338.8px"><svg width="26" height="32" viewBox="0 0 26 32"><path d="M4.600 2.600H15.200L23.600 11.000V27.600Q23.600 29.600 21.600 29.600H4.600Q2.600 29.600 2.600 27.600V4.600Q2.600 2.600 4.600 2.600Z" fill="#000" opacity="0.100"/><path d="M4.400 1.900H14.700L24.000 11.200V27.700Q24.000 30.100 21.600 30.100H4.400Q2.000 30.100 2.000 27.700V4.300Q2.000 1.900 4.400 1.900Z" fill="#f8f8f8" stroke="#d0d0d0" stroke-width="0.800"/><path d="M14.700 1.900V8.800Q14.700 11.200 17.100 11.200H24.000Z" fill="#ffffff" stroke="#dcdcdc" stroke-width="0.700" stroke-linejoin="round"/><rect x="7.900" y="11.000" width="4.300" height="4.300" fill="#bdbdbd"/><path d="M13.400 11.800H18.600M13.400 14.200H19.400M7.900 17.400H19.400M7.900 20.000H19.400" stroke="#cbcbcb" stroke-width="0.900"/></svg></div>
<div class="fi" style="left:359.0px;top:1381.5px"><svg width="30" height="27" viewBox="0 0 30 27"><defs><linearGradient id="fgr2" x1="0" y1="0" x2="0" y2="1"><stop offset="0" stop-color="#97d3f7"/><stop offset="0.850" stop-color="#6db4e5"/><stop offset="1" stop-color="#5aa5dc"/></linearGradient></defs><path d="M0.800 4.400Q0.800 1.200 4.000 1.200H11.000Q12.600 1.200 13.600 2.100L14.300 2.700Q14.900 3.200 15.800 3.200H26.000Q29.200 3.200 29.200 6.400V14H0.800Z" fill="#53a3df"/><rect x="2.500" y="5.400" width="25" height="5" rx="0.900" fill="#ffffff"/><path d="M0.800 10.000Q0.800 7.800 3.000 7.800H27.000Q29.200 7.800 29.200 10.000V22.900Q29.200 25.900 26.200 25.900H3.800Q0.800 25.900 0.800 22.900Z" fill="url(#fgr2)"/></svg></div>
<svg class="fi" style="left:337px;top:1384.3px" width="14" height="20" viewBox="0 0 14 20" fill="none" stroke="#7b7b7b" stroke-width="2.900" stroke-linecap="round" stroke-linejoin="round"><path d="M3.600 3.300L10.300 10.000L3.600 16.700"/></svg>
<div class="row" style="top:1415px;background:#f4f5f5"></div>
<div class="fi" style="left:360.7px;top:1418.8px"><svg width="26" height="32" viewBox="0 0 26 32"><path d="M4.600 2.600H15.200L23.600 11.000V27.600Q23.600 29.600 21.600 29.600H4.600Q2.600 29.600 2.600 27.600V4.600Q2.600 2.600 4.600 2.600Z" fill="#000" opacity="0.100"/><path d="M4.400 1.900H14.700L24.000 11.200V27.700Q24.000 30.100 21.600 30.100H4.400Q2.000 30.100 2.000 27.700V4.300Q2.000 1.900 4.400 1.900Z" fill="#f8f8f8" stroke="#d0d0d0" stroke-width="0.800"/><path d="M14.700 1.900V8.800Q14.700 11.200 17.100 11.200H24.000Z" fill="#ffffff" stroke="#dcdcdc" stroke-width="0.700" stroke-linejoin="round"/><rect x="11.000" y="3.400" width="3.900" height="6.400" rx="0.700" fill="#a2a2a2"/><rect x="11.900" y="7.000" width="2.100" height="1.900" fill="#f6f6f6"/><path d="M12.600 11.600H15.000M11.000 13.200H13.400M12.600 14.800H15.000M11.000 16.400H13.400" stroke="#adadad" stroke-width="0.900"/></svg></div>
<div class="fi" style="left:359.0px;top:1461.5px"><svg width="30" height="27" viewBox="0 0 30 27"><defs><linearGradient id="fgr3" x1="0" y1="0" x2="0" y2="1"><stop offset="0" stop-color="#97d3f7"/><stop offset="0.850" stop-color="#6db4e5"/><stop offset="1" stop-color="#5aa5dc"/></linearGradient></defs><path d="M0.800 4.400Q0.800 1.200 4.000 1.200H11.000Q12.600 1.200 13.600 2.100L14.300 2.700Q14.900 3.200 15.800 3.200H26.000Q29.200 3.200 29.200 6.400V14H0.800Z" fill="#53a3df"/><rect x="2.500" y="5.400" width="25" height="5" rx="0.900" fill="#ffffff"/><path d="M0.800 10.000Q0.800 7.800 3.000 7.800H27.000Q29.200 7.800 29.200 10.000V22.900Q29.200 25.900 26.200 25.900H3.800Q0.800 25.900 0.800 22.900Z" fill="url(#fgr3)"/></svg></div>
<svg class="fi" style="left:337px;top:1464.3px" width="14" height="20" viewBox="0 0 14 20" fill="none" stroke="#7b7b7b" stroke-width="2.900" stroke-linecap="round" stroke-linejoin="round"><path d="M3.600 3.300L10.300 10.000L3.600 16.700"/></svg>
<div class="row" style="top:1495px;background:#f4f5f5"></div>
<div class="fi" style="left:360.7px;top:1498.8px"><svg width="26" height="32" viewBox="0 0 26 32"><path d="M4.600 2.600H15.200L23.600 11.000V27.600Q23.600 29.600 21.600 29.600H4.600Q2.600 29.600 2.600 27.600V4.600Q2.600 2.600 4.600 2.600Z" fill="#000" opacity="0.100"/><path d="M4.400 1.900H14.700L24.000 11.200V27.700Q24.000 30.100 21.600 30.100H4.400Q2.000 30.100 2.000 27.700V4.300Q2.000 1.900 4.400 1.900Z" fill="#f8f8f8" stroke="#d0d0d0" stroke-width="0.800"/><path d="M14.700 1.900V8.800Q14.700 11.200 17.100 11.200H24.000Z" fill="#ffffff" stroke="#dcdcdc" stroke-width="0.700" stroke-linejoin="round"/><rect x="11.000" y="3.400" width="3.900" height="6.400" rx="0.700" fill="#a2a2a2"/><rect x="11.900" y="7.000" width="2.100" height="1.900" fill="#f6f6f6"/><path d="M12.600 11.600H15.000M11.000 13.200H13.400M12.600 14.800H15.000M11.000 16.400H13.400" stroke="#adadad" stroke-width="0.900"/></svg></div>
<div class="ghost" style="left:306px;width:365.600px;border-radius:0 15.300px 15.300px 0;z-index:5"></div>
<div class="si" style="top:119px;color:#1c1c1e"><svg width="40" height="40" viewBox="0 0 40 40" fill="none" stroke="currentColor" stroke-width="2.5" stroke-linecap="round" stroke-linejoin="round"><circle cx="20" cy="19.900" r="12.700"/><path d="M20 11.600V20.300H12.600" stroke-width="2.300"/></svg></div>
<div class="si" style="top:167px;color:#1c1c1e"><svg width="40" height="40" viewBox="0 0 40 40" fill="none" stroke="currentColor" stroke-width="2.5" stroke-linecap="round" stroke-linejoin="round"><path d="M25.200 12.300H19.600Q18.300 12.300 17.400 11.500L16.300 10.400Q15.300 9.500 13.900 9.500H8.400Q4.500 9.500 4.500 13.400V27.400Q4.500 31.300 8.400 31.300H28.700Q32.600 31.300 32.600 27.400V22.400"/><path d="M5.200 16.200H24.500"/><circle cx="33.200" cy="13.900" r="6.600" fill="currentColor" stroke="none"/><circle cx="33.200" cy="11.900" r="2.100" fill="#f4f8fb" stroke="none"/><path d="M29.300 17.700Q30.300 14.900 33.200 14.900Q36.100 14.900 37.100 17.700Q35.500 19.300 33.200 19.300Q30.900 19.300 29.300 17.700Z" fill="#f4f8fb" stroke="none"/></svg></div>
<div class="si" style="top:279px;color:#1c1c1e"><svg width="40" height="40" viewBox="0 0 40 40" fill="none" stroke="currentColor" stroke-width="2.5" stroke-linecap="round" stroke-linejoin="round"><path d="M5.600 13.000Q5.600 8.900 9.700 8.900H15.600Q17.300 8.900 18.700 9.800L20.400 10.900Q21.600 11.600 23.200 11.600H30.600Q34.800 11.600 34.800 15.800V27.000Q34.800 31.200 30.600 31.200H9.800Q5.600 31.200 5.600 27.000Z"/><path d="M9.900 16.300H30.500" stroke-width="2.000"/></svg></div>
<div class="si" style="top:327px;color:#1c1c1e"><svg width="40" height="40" viewBox="0 0 40 40" fill="none" stroke="currentColor" stroke-width="2.5" stroke-linecap="round" stroke-linejoin="round"><path d="M14.200 7.000H20.500L30.900 17.300V29.400Q30.900 33.000 27.300 33.000H14.200Q10.600 33.000 10.600 29.400V10.600Q10.600 7.000 14.200 7.000Z"/><path d="M20.500 7.400V14.300Q20.500 17.300 23.500 17.300H30.500" stroke-width="2.300"/></svg></div>
<div class="selrow" style="top:373px;background:#ecedee"></div>
<div class="si" style="top:375px;color:#0a6cff"><svg width="40" height="40" viewBox="0 0 40 40" fill="none" stroke="currentColor" stroke-width="2.5" stroke-linecap="round" stroke-linejoin="round"><circle cx="20" cy="20" r="12.400"/><path d="M20 12.800V26.800M14.700 21.800L20 27.100L25.300 21.800" stroke-width="2.400"/></svg></div>
<div class="si" style="top:423px;color:#1c1c1e"><svg width="40" height="40" viewBox="0 0 40 40" fill="none" stroke="currentColor" stroke-width="3.0" stroke-linecap="round" stroke-linejoin="round"><path d="M8.000 25.000H33.200"/><path d="M23.000 9.000L13.600 25.000"/><path d="M18.600 9.200L31.800 31.200"/><path d="M10.900 29.300L9.900 31.000"/></svg></div>
<div class="si" style="top:471px;color:#1c1c1e"><svg width="40" height="40" viewBox="0 0 40 40" fill="none" stroke="currentColor" stroke-width="2.5" stroke-linecap="round" stroke-linejoin="round"><path d="M5.600 13.000Q5.600 8.900 9.700 8.900H15.600Q17.300 8.900 18.700 9.800L20.400 10.900Q21.600 11.600 23.200 11.600H30.600Q34.800 11.600 34.800 15.800V27.000Q34.800 31.200 30.600 31.200H9.800Q5.600 31.200 5.600 27.000Z"/><path d="M9.900 16.300H30.500" stroke-width="2.000"/></svg></div>
<div class="si" style="top:519px;color:#1c1c1e"><svg width="40" height="40" viewBox="0 0 40 40" fill="none" stroke="currentColor" stroke-width="2.5" stroke-linecap="round" stroke-linejoin="round"><rect x="5.600" y="7.800" width="29.600" height="22.400" rx="4.200"/><path d="M6.300 13.300H34.500" stroke-width="2"/><rect x="10.200" y="23.300" width="20.600" height="4.800" rx="1.300" fill="currentColor" stroke="none"/></svg></div>
<div class="si" style="top:631px;color:#1c1c1e"><svg width="40" height="40" viewBox="0 0 40 40" fill="none" stroke="currentColor" stroke-width="2.5" stroke-linecap="round" stroke-linejoin="round"><path d="M11.2 30.600Q4.200 30.600 4.200 24.600Q4.200 19.800 9.300 18.900Q10.100 14.500 13.900 14.600Q17.200 9.400 23.000 9.600Q30.400 10.200 30.800 18.600Q36.800 19.000 36.800 24.700Q36.800 30.600 30.200 30.600Z"/></svg></div>
<div class="si" style="top:679px;color:#1c1c1e"><svg width="40" height="40" viewBox="0 0 40 40" fill="none" stroke="currentColor" stroke-width="2.5" stroke-linecap="round" stroke-linejoin="round"><path d="M5.200 19.400L20.600 6.800L36.000 19.400"/><path d="M9.400 16.800V30.000Q9.400 32.800 12.200 32.800H29.000Q31.800 32.800 31.800 30.000V16.800"/><path d="M31.000 14.200V9.400"/><rect x="17.000" y="23.200" width="7.200" height="9.600" fill="currentColor" stroke="none"/></svg></div>
<div class="selrow" style="top:725px;background:#0b7aff"></div>
<div class="si" style="top:727px;color:#ffffff"><svg width="40" height="40" viewBox="0 0 40 40" fill="none" stroke="currentColor" stroke-width="2.5" stroke-linecap="round" stroke-linejoin="round"><path d="M4.600 25.800L10.200 12.200Q11.300 9.600 14.100 9.600H26.500Q29.300 9.600 30.400 12.200L36.000 25.800"/><rect x="4.400" y="23.400" width="31.800" height="9.400" rx="4.200"/></svg></div>
<svg class="fi" style="z-index:13;left:240px;top:733px" width="24" height="26" viewBox="0 0 24 26"><path d="M12 3.000L21.400 13.600H2.600Z" fill="#0a5fd0" stroke="#0a5fd0" stroke-width="1.500" stroke-linejoin="round"/><rect x="2" y="17.200" width="20" height="3.600" rx="1.200" fill="#0a5fd0"/></svg>
<div class="si" style="top:775px;color:#1c1c1e"><svg width="40" height="40" viewBox="0 0 40 40" fill="none" stroke="currentColor" stroke-width="2.5" stroke-linecap="round" stroke-linejoin="round"><circle cx="20" cy="20.700" r="2.200" fill="currentColor" stroke="none"/><path d="M12.95 32.91A14.1 14.1 0 1 1 27.05 32.91M14.09 28.26A9.6 9.6 0 1 1 25.91 28.26M15.90 23.90A5.2 5.2 0 1 1 24.10 23.90" stroke-width="2.100"/></svg></div>
<div class="si" style="top:823px;color:#1c1c1e"><svg width="40" height="40" viewBox="0 0 40 40" fill="none" stroke="currentColor" stroke-width="2.3" stroke-linecap="round" stroke-linejoin="round"><circle cx="20" cy="20" r="12.700"/><path d="M20 7.300V32.700M8.200 15.200Q20 19.400 31.800 15.200M8.400 25.400Q20 20.800 31.600 25.400M18.600 7.600Q10.400 13.000 11.400 20.600Q12.200 27.400 18.600 32.400M21.400 7.600Q28.600 13.000 28.000 20.000Q27.600 27.000 22.600 32.000" stroke-width="1.900"/></svg></div>
<div class="si" style="top:871px;color:#1c1c1e"><svg width="40" height="40" viewBox="0 0 40 40" fill="none" stroke="currentColor" stroke-width="2.5" stroke-linecap="round" stroke-linejoin="round"><path d="M7.600 11.000H32.400"/><path d="M15.200 10.600V8.200Q15.200 5.600 17.800 5.600H22.200Q24.800 5.600 24.800 8.200V10.600"/><path d="M9.800 11.400L11.200 31.400Q11.400 34.400 14.400 34.400H25.600Q28.600 34.400 28.800 31.400L30.200 11.400"/><path d="M15.400 15.800L15.900 29.600M20 15.800V29.600M24.600 15.800L24.100 29.600" stroke-width="2"/></svg></div>
<div class="dot" style="top:992px;background:#f2372c"></div>
<div class="dot" style="top:1040px;background:#f18b09"></div>
<div class="dot" style="top:1088px;background:#f5c30d"></div>
<div class="dot" style="top:1136px;background:#20c23f"></div>
<div class="dot" style="top:1184px;background:#0b6af6"></div>
<div class="dot" style="top:1232px;background:#a24bcc"></div>
<div class="dot" style="top:1280px;background:#88878c"></div>
<div class="si" style="top:1319px;color:#1c1c1e"><svg width="40" height="40" viewBox="0 0 40 40" fill="none" stroke="currentColor" stroke-width="2.4" stroke-linecap="round" stroke-linejoin="round"><circle cx="14.800" cy="20" r="8.600"/><circle cx="25.200" cy="20" r="8.600"/></svg></div>
<div id="vtrack"></div><div id="vthumb"></div>
<div id="htrack"></div><div id="hthumb"></div>
<div id="pathbar"></div>
<svg class="fi" style="left:332px;top:1554px" width="24" height="27" viewBox="0 0 24 27"><defs><linearGradient id="dk" x1="0" y1="0" x2="0" y2="1"><stop offset="0" stop-color="#d9d9d9"/><stop offset="1" stop-color="#a9a9a9"/></linearGradient></defs><rect x="1" y="1" width="21.600" height="24" rx="2" fill="url(#dk)" stroke="#8d8d8d" stroke-width="0.800"/><rect x="1.400" y="21.500" width="20.800" height="3.300" fill="#7e7e7e"/><path d="M11.800 8.200Q12.800 6.200 14.400 6.000Q14.400 8.000 12.400 8.600ZM8.400 9.600Q10.000 8.600 11.800 9.600Q13.800 8.600 15.400 9.800Q13.600 11.400 15.800 13.800Q14.600 17.000 13.000 16.600Q11.800 16.000 10.600 16.600Q8.800 17.000 7.600 13.600Q7.000 10.800 8.400 9.600Z" fill="#f3f3f3"/></svg>
<svg class="fi" style="left:472.5px;top:1560px" width="10" height="16" viewBox="0 0 10 16" fill="none" stroke="#7b7b7b" stroke-width="2.300" stroke-linecap="round" stroke-linejoin="round"><path d="M2.200 2.600L7.600 8.000L2.200 13.400"/></svg>
<svg class="fi" style="left:531px;top:1560px" width="10" height="16" viewBox="0 0 10 16" fill="none" stroke="#7b7b7b" stroke-width="2.300" stroke-linecap="round" stroke-linejoin="round"><path d="M2.200 2.600L7.600 8.000L2.200 13.400"/></svg>
<svg class="fi" style="left:589px;top:1560px" width="10" height="16" viewBox="0 0 10 16" fill="none" stroke="#7b7b7b" stroke-width="2.300" stroke-linecap="round" stroke-linejoin="round"><path d="M2.200 2.600L7.600 8.000L2.200 13.400"/></svg>
<svg class="fi" style="left:770.5px;top:1560px" width="10" height="16" viewBox="0 0 10 16" fill="none" stroke="#7b7b7b" stroke-width="2.300" stroke-linecap="round" stroke-linejoin="round"><path d="M2.200 2.600L7.600 8.000L2.200 13.400"/></svg>
<div class="fi" style="left:495px;top:1555.500px"><svg width="25.8" height="23.2" viewBox="0 0 30 27"><defs><linearGradient id="fgp0" x1="0" y1="0" x2="0" y2="1"><stop offset="0" stop-color="#97d3f7"/><stop offset="0.850" stop-color="#6db4e5"/><stop offset="1" stop-color="#5aa5dc"/></linearGradient></defs><path d="M0.800 4.400Q0.800 1.200 4.000 1.200H11.000Q12.600 1.200 13.600 2.100L14.300 2.700Q14.900 3.200 15.800 3.200H26.000Q29.200 3.200 29.200 6.400V14H0.800Z" fill="#53a3df"/><rect x="2.500" y="5.400" width="25" height="5" rx="0.900" fill="#ffffff"/><path d="M0.800 10.000Q0.800 7.800 3.000 7.800H27.000Q29.200 7.800 29.200 10.000V22.900Q29.200 25.900 26.200 25.900H3.800Q0.800 25.900 0.800 22.900Z" fill="url(#fgp0)"/><circle cx="15" cy="16" r="5.200" fill="none" stroke="#3d8fd0" stroke-width="1.300"/><circle cx="15" cy="14.600" r="1.700" fill="#3d8fd0"/><path d="M11.800 19.200Q15 15.800 18.200 19.200Q15 21.600 11.800 19.200Z" fill="#3d8fd0"/></svg></div>
<div class="fi" style="left:553px;top:1555.500px"><svg width="25.8" height="23.2" viewBox="0 0 30 27"><defs><linearGradient id="fgp1" x1="0" y1="0" x2="0" y2="1"><stop offset="0" stop-color="#97d3f7"/><stop offset="0.850" stop-color="#6db4e5"/><stop offset="1" stop-color="#5aa5dc"/></linearGradient></defs><path d="M0.800 4.400Q0.800 1.200 4.000 1.200H11.000Q12.600 1.200 13.600 2.100L14.300 2.700Q14.900 3.200 15.800 3.200H26.000Q29.200 3.200 29.200 6.400V14H0.800Z" fill="#53a3df"/><rect x="2.500" y="5.400" width="25" height="5" rx="0.900" fill="#ffffff"/><path d="M0.800 10.000Q0.800 7.800 3.000 7.800H27.000Q29.200 7.800 29.200 10.000V22.900Q29.200 25.900 26.200 25.900H3.800Q0.800 25.900 0.800 22.900Z" fill="url(#fgp1)"/><path d="M9.800 16.000L15 11.400L20.200 16.000M11.200 15.200V20.600H18.800V15.200" fill="#3d8fd0" stroke="#3d8fd0" stroke-width="1.200" stroke-linejoin="round"/><rect x="14" y="17.200" width="2.200" height="3.400" fill="#6db6ea"/></svg></div>
<div class="fi" style="left:611px;top:1555.500px"><svg width="25.8" height="23.2" viewBox="0 0 30 27"><defs><linearGradient id="fgp2" x1="0" y1="0" x2="0" y2="1"><stop offset="0" stop-color="#97d3f7"/><stop offset="0.850" stop-color="#6db4e5"/><stop offset="1" stop-color="#5aa5dc"/></linearGradient></defs><path d="M0.800 4.400Q0.800 1.200 4.000 1.200H11.000Q12.600 1.200 13.600 2.100L14.300 2.700Q14.900 3.200 15.800 3.200H26.000Q29.200 3.200 29.200 6.400V14H0.800Z" fill="#53a3df"/><rect x="2.500" y="5.400" width="25" height="5" rx="0.900" fill="#ffffff"/><path d="M0.800 10.000Q0.800 7.800 3.000 7.800H27.000Q29.200 7.800 29.200 10.000V22.900Q29.200 25.900 26.200 25.900H3.800Q0.800 25.900 0.800 22.900Z" fill="url(#fgp2)"/><circle cx="15" cy="16" r="5.200" fill="none" stroke="#3d8fd0" stroke-width="1.300"/><path d="M15 13.200V18.600M12.800 16.600L15 18.800L17.200 16.600" fill="none" stroke="#3d8fd0" stroke-width="1.300" stroke-linecap="round" stroke-linejoin="round"/></svg></div>
<div class="fi" style="left:795px;top:1553px"><svg width="22.500" height="27.700" viewBox="0 0 26 32"><path d="M4.600 2.600H15.200L23.600 11.000V27.600Q23.600 29.600 21.600 29.600H4.600Q2.600 29.600 2.600 27.600V4.600Q2.600 2.600 4.600 2.600Z" fill="#000" opacity="0.100"/><path d="M4.400 1.900H14.700L24.000 11.200V27.700Q24.000 30.100 21.600 30.100H4.400Q2.000 30.100 2.000 27.700V4.300Q2.000 1.900 4.400 1.900Z" fill="#f8f8f8" stroke="#d0d0d0" stroke-width="0.800"/><path d="M14.700 1.900V8.800Q14.700 11.200 17.100 11.200H24.000Z" fill="#ffffff" stroke="#dcdcdc" stroke-width="0.700" stroke-linejoin="round"/><text x="12.300" y="20.000" font-family="'Liberation Sans',sans-serif" font-size="13.600" fill="#b9b9b9" text-anchor="middle">?</text></svg></div>
<div id="sidebar"></div>
<div class="tl" style="left:44px;background:#ee6a69;border-color:#ea4a45"></div>
<div class="tl" style="left:90px;background:#f4c945;border-color:#eeb81c"></div>
<div class="tl" style="left:136px;background:#62c466;border-color:#52b455"></div>
<div class="pill" style="left:322px;top:29px;width:146px;height:72px"></div><div class="pill" style="left:1036px;top:29px;width:296px;height:72px"></div><div class="pill" style="left:1365.5px;top:29px;width:99px;height:72px"></div><div class="pill" style="left:1500px;top:29px;width:220px;height:72px"></div><div class="pill" style="left:1756px;top:29px;width:75px;height:72px"></div><div class="pathpill"></div><div class="plus"></div><div class="viewsel"></div><svg class="tb" width="1868" height="200" viewBox="0 0 1868 200" fill="none" stroke="#4a4a4a" stroke-width="2.700" stroke-linecap="round" stroke-linejoin="round">
<path d="M365.800 53.000L352.600 65.000L365.800 77.000" stroke-width="3.200"/>
<path d="M424.400 53.000L437.400 65.000L424.400 77.000" stroke="#bdbdbd" stroke-width="3.200"/>
<path d="M395 45V84.500" stroke="#e4e4e4" stroke-width="1.500"/>
<!-- grid -->
<rect x="1062.500" y="51.200" width="10.800" height="10.800" rx="2.600"/><rect x="1079.200" y="51.200" width="10.800" height="10.800" rx="2.600"/>
<rect x="1062.500" y="67.600" width="10.800" height="10.800" rx="2.600"/><rect x="1079.200" y="67.600" width="10.800" height="10.800" rx="2.600"/>
<!-- list -->
<g stroke-width="2.600"><path d="M1141 54.700H1163M1141 64.700H1163M1141 74.700H1163"/></g>
<g fill="#4a4a4a" stroke="none"><circle cx="1133" cy="54.700" r="2.400"/><circle cx="1133" cy="64.700" r="2.400"/><circle cx="1133" cy="74.700" r="2.400"/></g>
<!-- columns -->
<rect x="1204.500" y="51.500" width="36" height="26.800" rx="4.500"/><path d="M1216.600 52V78M1228.400 52V78" stroke-width="2.600"/>
<path d="M1259 45V84.500" stroke="#e4e4e4" stroke-width="1.500"/>
<!-- gallery -->
<rect x="1275.800" y="52.000" width="34.600" height="17.000" rx="4.200"/>
<g fill="#4a4a4a" stroke="none"><rect x="1275" y="74.200" width="4.900" height="4.700"/><rect x="1282.800" y="74.200" width="4.900" height="4.700"/><rect x="1290.600" y="74.200" width="4.900" height="4.700"/><rect x="1298.400" y="74.200" width="4.900" height="4.700"/><rect x="1306.200" y="74.200" width="4.900" height="4.700"/></g>
<!-- group -->
<g stroke-width="2.400"><path d="M1386 48.000H1419.500M1386 67.200H1419.500"/>
<rect x="1386" y="54.400" width="7.600" height="7.200" rx="1.600"/><rect x="1399" y="54.400" width="7.600" height="7.200" rx="1.600"/><rect x="1412" y="54.400" width="7.600" height="7.200" rx="1.600"/>
<rect x="1386" y="73.400" width="7.600" height="7.200" rx="1.600"/><rect x="1399" y="73.400" width="7.600" height="7.200" rx="1.600"/><rect x="1412" y="73.400" width="7.600" height="7.200" rx="1.600"/></g>
<path d="M1432.400 62.600L1438.400 68.600L1444.400 62.600" stroke-width="2.800"/>
<!-- share -->
<path d="M1529.500 56.200H1527.500Q1522.500 56.200 1522.500 61.200V75.200Q1522.500 80.200 1527.500 80.200H1543.800Q1548.800 80.200 1548.800 75.200V61.200Q1548.800 56.200 1543.800 56.200H1541.800" stroke-width="2.900"/>
<path d="M1535.700 69.500V47.000M1529.000 53.200L1535.700 46.600L1542.400 53.200" stroke-width="2.900"/>
<!-- tag -->
<path d="M1611.200 49.000L1621.800 49.400Q1627.200 49.600 1627.400 55.000L1627.800 64.800Q1627.600 66.200 1626.600 67.200L1612.800 81.000Q1610.800 83.000 1608.800 81.000L1594.600 66.800Q1592.600 64.800 1594.600 62.800L1608.600 50.000Q1609.800 49.000 1611.200 49.000Z" stroke-width="2.900"/>
<circle cx="1617.800" cy="58.600" r="2.400" fill="#4a4a4a" stroke="none"/>
<!-- ellipsis -->
<g fill="#4a4a4a" stroke="none"><circle cx="1671.800" cy="64.600" r="3.100"/><circle cx="1684.200" cy="64.600" r="3.100"/><circle cx="1696.400" cy="64.600" r="3.100"/></g>
<!-- search -->
<circle cx="1790.600" cy="61.400" r="11.600" stroke-width="3.200"/><path d="M1799.200 70.200L1807.400 78.600" stroke-width="3.600"/>
<!-- plus -->
<path d="M1792.200 144.800H1812.400M1802.300 134.800V154.900" stroke="#111" stroke-width="2.600"/>
</svg>
<span class="t" style="top:261px;line-height:30px;font-size:26.7px;color:#ffffff;left:400.20px;letter-spacing:0.658px;">adafruit-circuitpython-studiolab_pico<span style="letter-spacing:-0.05em">...</span>0251209-main-PR10737-a8f4738.uf2</span>
<span class="t" style="top:261px;line-height:30px;font-size:26.7px;color:#cbdaf8;left:1453.96px;letter-spacing:0.381px;">2,9 MB</span>
<span class="t" style="top:261px;line-height:30px;font-size:26.7px;color:#cbdaf8;left:1566.50px;letter-spacing:0.294px;">Document</span>
<span class="t" style="top:261px;line-height:30px;font-size:26.7px;color:#cbdaf8;left:1796.00px;letter-spacing:0.375px;">Toda</span>
<span class="t" style="top:301px;line-height:30px;font-size:26.7px;color:#262626;left:400.20px;letter-spacing:0.606px;">adafruit-circuitpython-studiolab_pico<span style="letter-spacing:-0.05em">...</span>1227-main-PR10734-9459aa9 (1).uf2</span>
<span class="t" style="top:301px;line-height:30px;font-size:26.7px;color:#7a7a7a;left:1453.96px;letter-spacing:0.381px;">2,9 MB</span>
<span class="t" style="top:301px;line-height:30px;font-size:26.7px;color:#7a7a7a;left:1566.50px;letter-spacing:0.294px;">Document</span>
<span class="t" style="top:301px;line-height:30px;font-size:26.7px;color:#7a7a7a;left:1796.00px;letter-spacing:0.375px;">Toda</span>
<span class="t" style="top:341px;line-height:30px;font-size:26.7px;color:#262626;left:400.20px;letter-spacing:0.323px;">upgrade_picoexpander.svg</span>
<span class="t" style="top:341px;line-height:30px;font-size:26.7px;color:#7a7a7a;left:1478.67px;letter-spacing:-0.185px;">1 MB</span>
<span class="t" style="top:341px;line-height:30px;font-size:26.7px;color:#7a7a7a;left:1566.50px;letter-spacing:-0.621px;">SVG Image</span>
<span class="t" style="top:341px;line-height:30px;font-size:26.7px;color:#7a7a7a;left:1796.00px;letter-spacing:0.375px;">Toda</span>
<span class="t" style="top:381px;line-height:30px;font-size:26.7px;color:#262626;left:400.20px;letter-spacing:0.596px;">internet.png</span>
<span class="t" style="top:381px;line-height:30px;font-size:26.7px;color:#7a7a7a;left:1449.19px;letter-spacing:0.495px;">449 KB</span>
<span class="t" style="top:381px;line-height:30px;font-size:26.7px;color:#7a7a7a;left:1566.50px;letter-spacing:-0.331px;">PNG image</span>
<span class="t" style="top:381px;line-height:30px;font-size:26.7px;color:#7a7a7a;left:1796.00px;letter-spacing:0.375px;">Toda</span>
<span class="t" style="top:421px;line-height:30px;font-size:26.7px;color:#262626;left:400.20px;letter-spacing:0.416px;">io_touch_buzz.svg</span>
<span class="t" style="top:421px;line-height:30px;font-size:26.7px;color:#7a7a7a;left:1454.07px;letter-spacing:0.359px;">1,1 MB</span>
<span class="t" style="top:421px;line-height:30px;font-size:26.7px;color:#7a7a7a;left:1566.50px;letter-spacing:-0.621px;">SVG Image</span>
<span class="t" style="top:421px;line-height:30px;font-size:26.7px;color:#7a7a7a;left:1796.00px;letter-spacing:0.375px;">Toda</span>
<span class="t" style="top:461px;line-height:30px;font-size:26.7px;color:#262626;left:400.20px;letter-spacing:0.213px;">IO_touch_buz.svg</span>
<span class="t" style="top:461px;line-height:30px;font-size:26.7px;color:#7a7a7a;left:1454.07px;letter-spacing:0.359px;">1,1 MB</span>
<span class="t" style="top:461px;line-height:30px;font-size:26.7px;color:#7a7a7a;left:1566.50px;letter-spacing:-0.621px;">SVG Image</span>
<span class="t" style="top:461px;line-height:30px;font-size:26.7px;color:#7a7a7a;left:1796.00px;letter-spacing:0.375px;">Toda</span>
<span class="t" style="top:501px;line-height:30px;font-size:26.7px;color:#262626;left:400.20px;letter-spacing:0.486px;">touch.svg</span>
<span class="t" style="top:501px;line-height:30px;font-size:26.7px;color:#7a7a7a;left:1454.07px;letter-spacing:0.359px;">1,1 MB</span>
<span class="t" style="top:501px;line-height:30px;font-size:26.7px;color:#7a7a7a;left:1566.50px;letter-spacing:-0.621px;">SVG Image</span>
<span class="t" style="top:501px;line-height:30px;font-size:26.7px;color:#7a7a7a;left:1796.00px;letter-spacing:0.375px;">Toda</span>
<span class="t" style="top:541px;line-height:30px;font-size:26.7px;color:#262626;left:400.20px;letter-spacing:0.569px;">ezgif.com-animated-gif-maker.gif</span>
<span class="t" style="top:541px;line-height:30px;font-size:26.7px;color:#7a7a7a;left:1448.87px;letter-spacing:0.559px;">194 KB</span>
<span class="t" style="top:541px;line-height:30px;font-size:26.7px;color:#7a7a7a;left:1566.50px;letter-spacing:-0.547px;">GIF Image</span>
<span class="t" style="top:541px;line-height:30px;font-size:26.7px;color:#7a7a7a;left:1796.00px;letter-spacing:0.375px;">Toda</span>
<span class="t" style="top:581px;line-height:30px;font-size:26.7px;color:#262626;left:400.20px;letter-spacing:0.554px;">blink_off.png</span>
<span class="t" style="top:581px;line-height:30px;font-size:26.7px;color:#7a7a7a;left:1448.87px;letter-spacing:0.559px;">158 KB</span>
<span class="t" style="top:581px;line-height:30px;font-size:26.7px;color:#7a7a7a;left:1566.50px;letter-spacing:-0.331px;">PNG image</span>
<span class="t" style="top:581px;line-height:30px;font-size:26.7px;color:#7a7a7a;left:1796.00px;letter-spacing:0.375px;">Toda</span>
<span class="t" style="top:621px;line-height:30px;font-size:26.7px;color:#262626;left:400.20px;letter-spacing:0.585px;">blink.png</span>
<span class="t" style="top:621px;line-height:30px;font-size:26.7px;color:#7a7a7a;left:1448.87px;letter-spacing:0.559px;">173 KB</span>
<span class="t" style="top:621px;line-height:30px;font-size:26.7px;color:#7a7a7a;left:1566.50px;letter-spacing:-0.331px;">PNG image</span>
<span class="t" style="top:621px;line-height:30px;font-size:26.7px;color:#7a7a7a;left:1796.00px;letter-spacing:0.375px;">Toda</span>
<span class="t" style="top:661px;line-height:30px;font-size:26.7px;color:#262626;left:400.20px;letter-spacing:0.409px;">pico_mu.png</span>
<span class="t" style="top:661px;line-height:30px;font-size:26.7px;color:#7a7a7a;left:1448.87px;letter-spacing:0.559px;">190 KB</span>
<span class="t" style="top:661px;line-height:30px;font-size:26.7px;color:#7a7a7a;left:1566.50px;letter-spacing:-0.331px;">PNG image</span>
<span class="t" style="top:661px;line-height:30px;font-size:26.7px;color:#7a7a7a;left:1796.00px;letter-spacing:0.375px;">Toda</span>
<span class="t" style="top:701px;line-height:30px;font-size:26.7px;color:#262626;left:400.20px;letter-spacing:0.340px;">overview.png</span>
<span class="t" style="top:701px;line-height:30px;font-size:26.7px;color:#7a7a7a;left:1448.54px;letter-spacing:0.623px;">642 KB</span>
<span class="t" style="top:701px;line-height:30px;font-size:26.7px;color:#7a7a7a;left:1566.50px;letter-spacing:-0.331px;">PNG image</span>
<span class="t" style="top:701px;line-height:30px;font-size:26.7px;color:#7a7a7a;left:1796.00px;letter-spacing:0.375px;">Toda</span>
<span class="t" style="top:741px;line-height:30px;font-size:26.7px;color:#262626;left:400.20px;letter-spacing:0.171px;">1. 20190111 Eindrapportage TUe Educ<span style="letter-spacing:-0.05em">...</span>novation Space Intelligent Lighting.pdf</span>
<span class="t" style="top:741px;line-height:30px;font-size:26.7px;color:#7a7a7a;left:1453.96px;letter-spacing:0.381px;">2,1 MB</span>
<span class="t" style="top:741px;line-height:30px;font-size:26.7px;color:#7a7a7a;left:1566.50px;letter-spacing:-0.157px;">PDF Document</span>
<span class="t" style="top:741px;line-height:30px;font-size:26.7px;color:#7a7a7a;left:1796.01px;letter-spacing:0.410px;">Yest</span>
<span class="t" style="top:781px;line-height:30px;font-size:26.7px;color:#262626;left:400.20px;letter-spacing:0.316px;">Innovation Space - Intelligent Lighting webversion.pdf</span>
<span class="t" style="top:781px;line-height:30px;font-size:26.7px;color:#7a7a7a;left:1465.13px;letter-spacing:0.343px;">53 KB</span>
<span class="t" style="top:781px;line-height:30px;font-size:26.7px;color:#7a7a7a;left:1566.50px;letter-spacing:-0.157px;">PDF Document</span>
<span class="t" style="top:781px;line-height:30px;font-size:26.7px;color:#7a7a7a;left:1796.01px;letter-spacing:0.410px;">Yest</span>
<span class="t" style="top:821px;line-height:30px;font-size:26.7px;color:#262626;left:400.20px;letter-spacing:-0.046px;">Sequence 01_4.mp4</span>
<span class="t" style="top:821px;line-height:30px;font-size:26.7px;color:#7a7a7a;left:1477.74px;letter-spacing:0.124px;">8 MB</span>
<span class="t" style="top:821px;line-height:30px;font-size:26.7px;color:#7a7a7a;left:1566.50px;letter-spacing:0.014px;">MPEG-4 movie</span>
<span class="t" style="top:821px;line-height:30px;font-size:26.7px;color:#7a7a7a;left:1796.01px;letter-spacing:0.410px;">Yest</span>
<span class="t" style="top:861px;line-height:30px;font-size:26.7px;color:#262626;left:400.20px;letter-spacing:-0.046px;">Sequence 01_3.mp4</span>
<span class="t" style="top:861px;line-height:30px;font-size:26.7px;color:#7a7a7a;left:1438.17px;letter-spacing:0.475px;">10,7 MB</span>
<span class="t" style="top:861px;line-height:30px;font-size:26.7px;color:#7a7a7a;left:1566.50px;letter-spacing:0.014px;">MPEG-4 movie</span>
<span class="t" style="top:861px;line-height:30px;font-size:26.7px;color:#7a7a7a;left:1796.01px;letter-spacing:0.410px;">Yest</span>
<span class="t" style="top:901px;line-height:30px;font-size:26.7px;color:#262626;left:400.20px;letter-spacing:0.017px;">Sequence 01_2.mp4</span>
<span class="t" style="top:901px;line-height:30px;font-size:26.7px;color:#7a7a7a;left:1477.53px;letter-spacing:0.193px;">7 MB</span>
<span class="t" style="top:901px;line-height:30px;font-size:26.7px;color:#7a7a7a;left:1566.50px;letter-spacing:0.014px;">MPEG-4 movie</span>
<span class="t" style="top:901px;line-height:30px;font-size:26.7px;color:#7a7a7a;left:1796.01px;letter-spacing:0.410px;">Yest</span>
<span class="t" style="top:941px;line-height:30px;font-size:26.7px;color:#262626;left:400.20px;letter-spacing:0.638px;">387324eng.pdf</span>
<span class="t" style="top:941px;line-height:30px;font-size:26.7px;color:#7a7a7a;left:1453.54px;letter-spacing:0.463px;">6,7 MB</span>
<span class="t" style="top:941px;line-height:30px;font-size:26.7px;color:#7a7a7a;left:1566.50px;letter-spacing:-0.157px;">PDF Document</span>
<span class="t" style="top:941px;line-height:30px;font-size:26.7px;color:#7a7a7a;left:1796.01px;letter-spacing:0.410px;">Yest</span>
<span class="t" style="top:981px;line-height:30px;font-size:26.7px;color:#262626;left:400.20px;letter-spacing:0.026px;">OpenHardwarePaper.pdf</span>
<span class="t" style="top:981px;line-height:30px;font-size:26.7px;color:#7a7a7a;left:1454.23px;letter-spacing:0.326px;">5,6 MB</span>
<span class="t" style="top:981px;line-height:30px;font-size:26.7px;color:#7a7a7a;left:1566.50px;letter-spacing:-0.157px;">PDF Document</span>
<span class="t" style="top:981px;line-height:30px;font-size:26.7px;color:#7a7a7a;left:1796.01px;letter-spacing:0.410px;">Yest</span>
<span class="t" style="top:1021px;line-height:30px;font-size:26.7px;color:#262626;left:400.20px;letter-spacing:0.148px;">Final_OSP_Evaluation_2024-Workplan_2025_002_.pdf</span>
<span class="t" style="top:1021px;line-height:30px;font-size:26.7px;color:#7a7a7a;left:1454.23px;letter-spacing:0.326px;">5,8 MB</span>
<span class="t" style="top:1021px;line-height:30px;font-size:26.7px;color:#7a7a7a;left:1566.50px;letter-spacing:-0.157px;">PDF Document</span>
<span class="t" style="top:1021px;line-height:30px;font-size:26.7px;color:#7a7a7a;left:1796.01px;letter-spacing:0.410px;">Yest</span>
<span class="t" style="top:1061px;line-height:30px;font-size:26.7px;color:#262626;left:400.20px;letter-spacing:0.213px;">Sequence01_1-ezgif.com-optimize.gif</span>
<span class="t" style="top:1061px;line-height:30px;font-size:26.7px;color:#7a7a7a;left:1454.23px;letter-spacing:0.326px;">5,6 MB</span>
<span class="t" style="top:1061px;line-height:30px;font-size:26.7px;color:#7a7a7a;left:1566.50px;letter-spacing:-0.547px;">GIF Image</span>
<span class="t" style="top:1061px;line-height:30px;font-size:26.7px;color:#7a7a7a;left:1796.01px;letter-spacing:0.410px;">Yest</span>
<span class="t" style="top:1101px;line-height:30px;font-size:26.7px;color:#262626;left:400.20px;letter-spacing:-0.421px;">Sequence 01_1.mp4</span>
<span class="t" style="top:1101px;line-height:30px;font-size:26.7px;color:#7a7a7a;left:1438.17px;letter-spacing:0.806px;">11,5 MB</span>
<span class="t" style="top:1101px;line-height:30px;font-size:26.7px;color:#7a7a7a;left:1566.50px;letter-spacing:0.014px;">MPEG-4 movie</span>
<span class="t" style="top:1101px;line-height:30px;font-size:26.7px;color:#7a7a7a;left:1796.01px;letter-spacing:0.410px;">Yest</span>
<span class="t" style="top:1141px;line-height:30px;font-size:26.7px;color:#262626;left:400.20px;letter-spacing:-0.076px;">Sequence 01.mp4</span>
<span class="t" style="top:1141px;line-height:30px;font-size:26.7px;color:#7a7a7a;left:1459.86px;letter-spacing:0.853px;">23 MB</span>
<span class="t" style="top:1141px;line-height:30px;font-size:26.7px;color:#7a7a7a;left:1566.50px;letter-spacing:0.014px;">MPEG-4 movie</span>
<span class="t" style="top:1141px;line-height:30px;font-size:26.7px;color:#7a7a7a;left:1796.01px;letter-spacing:0.410px;">Yest</span>
<span class="t" style="top:1181px;line-height:30px;font-size:26.7px;color:#262626;left:400.20px;letter-spacing:0.136px;">remote holder skewed v2.SLDPRT.sldprt</span>
<span class="t" style="top:1181px;line-height:30px;font-size:26.7px;color:#7a7a7a;left:1448.87px;letter-spacing:0.559px;">170 KB</span>
<span class="t" style="top:1181px;line-height:30px;font-size:26.7px;color:#7a7a7a;left:1566.50px;letter-spacing:0.294px;">Document</span>
<span class="t" style="top:1181px;line-height:30px;font-size:26.7px;color:#7a7a7a;left:1796.01px;letter-spacing:0.410px;">Yest</span>
<span class="t" style="top:1221px;line-height:30px;font-size:26.7px;color:#262626;left:400.20px;letter-spacing:0.471px;">dreuxproductions_a012c0308_251009_002423-mov_2026-01-06_1327</span>
<span class="t" style="top:1221px;line-height:30px;font-size:26.7px;color:#7a7a7a;left:1517.40px;transform:scaleX(1.326);transform-origin:0 0;">--</span>
<span class="t" style="top:1221px;line-height:30px;font-size:26.7px;color:#7a7a7a;left:1566.50px;letter-spacing:0.017px;">Folder</span>
<span class="t" style="top:1221px;line-height:30px;font-size:26.7px;color:#7a7a7a;left:1796.01px;letter-spacing:0.410px;">Yest</span>
<span class="t" style="top:1261px;line-height:30px;font-size:26.7px;color:#262626;left:400.20px;letter-spacing:0.430px;">dreuxproductions_a012c0308_251009_002423-mov_2026-01-06_1327.zip</span>
<span class="t" style="top:1261px;line-height:30px;font-size:26.7px;color:#7a7a7a;left:1439.37px;letter-spacing:0.320px;">1,82 GB</span>
<span class="t" style="top:1261px;line-height:30px;font-size:26.7px;color:#7a7a7a;left:1566.50px;letter-spacing:0.020px;">ZIP archive</span>
<span class="t" style="top:1261px;line-height:30px;font-size:26.7px;color:#7a7a7a;left:1796.01px;letter-spacing:0.410px;">Yest</span>
<span class="t" style="top:1301px;line-height:30px;font-size:26.7px;color:#262626;left:400.20px;letter-spacing:0.331px;">formandsensesorder.pdf</span>
<span class="t" style="top:1301px;line-height:30px;font-size:26.7px;color:#7a7a7a;left:1448.96px;letter-spacing:0.541px;">234 KB</span>
<span class="t" style="top:1301px;line-height:30px;font-size:26.7px;color:#7a7a7a;left:1566.50px;letter-spacing:-0.157px;">PDF Document</span>
<span class="t" style="top:1301px;line-height:30px;font-size:26.7px;color:#7a7a7a;left:1796.01px;letter-spacing:0.410px;">Yest</span>
<span class="t" style="top:1341px;line-height:30px;font-size:26.7px;color:#262626;left:400.20px;letter-spacing:0.232px;">Schedule for Expert Availability F&amp;S 2026.pdf</span>
<span class="t" style="top:1341px;line-height:30px;font-size:26.7px;color:#7a7a7a;left:1465.09px;letter-spacing:0.354px;">41 KB</span>
<span class="t" style="top:1341px;line-height:30px;font-size:26.7px;color:#7a7a7a;left:1566.50px;letter-spacing:-0.157px;">PDF Document</span>
<span class="t" style="top:1341px;line-height:30px;font-size:26.7px;color:#7a7a7a;left:1796.01px;letter-spacing:0.410px;">Yest</span>
<span class="t" style="top:1381px;line-height:30px;font-size:26.7px;color:#262626;left:400.20px;letter-spacing:0.116px;">Argumentative essays</span>
<span class="t" style="top:1381px;line-height:30px;font-size:26.7px;color:#7a7a7a;left:1517.40px;transform:scaleX(1.326);transform-origin:0 0;">--</span>
<span class="t" style="top:1381px;line-height:30px;font-size:26.7px;color:#7a7a7a;left:1566.50px;letter-spacing:0.017px;">Folder</span>
<span class="t" style="top:1381px;line-height:30px;font-size:26.7px;color:#7a7a7a;left:1796.01px;letter-spacing:0.410px;">Yest</span>
<span class="t" style="top:1421px;line-height:30px;font-size:26.7px;color:#262626;left:400.20px;letter-spacing:0.166px;">Argumentative essays.zip</span>
<span class="t" style="top:1421px;line-height:30px;font-size:26.7px;color:#7a7a7a;left:1454.07px;letter-spacing:0.359px;">1,7 MB</span>
<span class="t" style="top:1421px;line-height:30px;font-size:26.7px;color:#7a7a7a;left:1566.50px;letter-spacing:0.020px;">ZIP archive</span>
<span class="t" style="top:1421px;line-height:30px;font-size:26.7px;color:#7a7a7a;left:1796.01px;letter-spacing:0.410px;">Yest</span>
<span class="t" style="top:1461px;line-height:30px;font-size:26.7px;color:#262626;left:400.20px;letter-spacing:0.633px;">cik-project-bundle-10.x-mpy-2025.12</span>
<span class="t" style="top:1461px;line-height:30px;font-size:26.7px;color:#7a7a7a;left:1517.40px;transform:scaleX(1.326);transform-origin:0 0;">--</span>
<span class="t" style="top:1461px;line-height:30px;font-size:26.7px;color:#7a7a7a;left:1566.50px;letter-spacing:0.017px;">Folder</span>
<span class="t" style="top:1461px;line-height:30px;font-size:26.7px;color:#7a7a7a;left:1796.01px;letter-spacing:0.410px;">Yest</span>
<span class="t" style="top:1501px;line-height:30px;font-size:26.7px;color:#262626;left:400.20px;letter-spacing:0.599px;">cik-project-bundle-10.x-mpy-2025.12.zip</span>
<span class="t" style="top:1501px;line-height:30px;font-size:26.7px;color:#7a7a7a;left:1448.96px;letter-spacing:0.541px;">251 KB</span>
<span class="t" style="top:1501px;line-height:30px;font-size:26.7px;color:#7a7a7a;left:1566.50px;letter-spacing:0.020px;">ZIP archive</span>
<span class="t" style="top:1501px;line-height:30px;font-size:26.7px;color:#7a7a7a;left:1796.01px;letter-spacing:0.410px;">Yest</span>
<span class="t" style="top:203px;line-height:25px;font-size:22.6px;color:#7a7a7a;left:399.75px;letter-spacing:0.059px;">Name</span>
<span class="t" style="top:203px;line-height:25px;font-size:22.6px;color:#7a7a7a;left:1371.87px;letter-spacing:-0.241px;">Size</span>
<span class="t" style="top:203px;line-height:25px;font-size:22.6px;color:#7a7a7a;left:1565.55px;letter-spacing:0.359px;">Kind</span>
<span class="t" style="top:203px;line-height:25px;font-size:22.6px;color:#222222;font-weight:700;left:1795.49px;">Date</span>
<span class="t" style="top:127px;line-height:25px;font-size:22.6px;color:#1c1c1e;left:106.20px;letter-spacing:0.038px;z-index:13;">Recents</span>
<span class="t" style="top:175px;line-height:25px;font-size:22.6px;color:#1c1c1e;left:106.20px;letter-spacing:0.179px;z-index:13;">Shared</span>
<span class="t" style="top:287px;line-height:25px;font-size:22.6px;color:#1c1c1e;left:106.20px;letter-spacing:0.833px;z-index:13;">surfdrive</span>
<span class="t" style="top:335px;line-height:25px;font-size:22.6px;color:#1c1c1e;left:106.20px;letter-spacing:0.504px;z-index:13;">Documents</span>
<span class="t" style="top:383px;line-height:25px;font-size:22.6px;color:#0a6cff;left:106.20px;letter-spacing:0.417px;z-index:13;">Downloads</span>
<span class="t" style="top:431px;line-height:25px;font-size:22.6px;color:#1c1c1e;left:106.20px;letter-spacing:0.617px;z-index:13;">Applications</span>
<span class="t" style="top:479px;line-height:25px;font-size:22.6px;color:#1c1c1e;left:106.20px;letter-spacing:0.499px;z-index:13;">Projects</span>
<span class="t" style="top:527px;line-height:25px;font-size:22.6px;color:#1c1c1e;left:106.20px;letter-spacing:0.643px;z-index:13;">Desktop</span>
<span class="t" style="top:639px;line-height:25px;font-size:22.6px;color:#1c1c1e;left:106.20px;letter-spacing:0.386px;z-index:13;">iCloud Drive</span>
<span class="t" style="top:687px;line-height:25px;font-size:22.6px;color:#1c1c1e;left:106.20px;letter-spacing:0.589px;z-index:13;">jerryvos</span>
<span class="t" style="top:735px;line-height:25px;font-size:22.6px;color:#ffffff;left:106.20px;letter-spacing:0.325px;z-index:13;">RP2350</span>
<span class="t" style="top:783px;line-height:25px;font-size:22.6px;color:#1c1c1e;left:106.20px;letter-spacing:0.493px;z-index:13;">AirDrop</span>
<span class="t" style="top:831px;line-height:25px;font-size:22.6px;color:#1c1c1e;left:106.20px;letter-spacing:0.682px;z-index:13;">Network</span>
<span class="t" style="top:879px;line-height:25px;font-size:22.6px;color:#1c1c1e;left:106.20px;letter-spacing:0.286px;z-index:13;">Trash</span>
<span class="t" style="top:991px;line-height:25px;font-size:22.6px;color:#1c1c1e;left:106.20px;letter-spacing:-0.398px;z-index:13;">Red</span>
<span class="t" style="top:1039px;line-height:25px;font-size:22.6px;color:#1c1c1e;left:106.20px;letter-spacing:0.286px;z-index:13;">Orange</span>
<span class="t" style="top:1087px;line-height:25px;font-size:22.6px;color:#1c1c1e;left:106.20px;letter-spacing:0.172px;z-index:13;">Yellow</span>
<span class="t" style="top:1135px;line-height:25px;font-size:22.6px;color:#1c1c1e;left:106.20px;letter-spacing:0.168px;z-index:13;">Green</span>
<span class="t" style="top:1183px;line-height:25px;font-size:22.6px;color:#1c1c1e;left:106.20px;letter-spacing:0.190px;z-index:13;">Blue</span>
<span class="t" style="top:1231px;line-height:25px;font-size:22.6px;color:#1c1c1e;left:106.20px;letter-spacing:0.498px;z-index:13;">Purple</span>
<span class="t" style="top:1279px;line-height:25px;font-size:22.6px;color:#1c1c1e;left:106.20px;letter-spacing:-0.508px;z-index:13;">Gray</span>
<span class="t" style="top:1327px;line-height:25px;font-size:22.6px;color:#1c1c1e;left:106.20px;letter-spacing:0.839px;z-index:13;">All Tags<span style="letter-spacing:-0.05em">...</span></span>
<span class="t" style="top:249px;line-height:25px;font-size:22.6px;color:#868689;font-weight:700;left:54.09px;letter-spacing:-0.116px;z-index:13;">Favorites</span>
<span class="t" style="top:601px;line-height:25px;font-size:22.6px;color:#868689;font-weight:700;left:54.09px;letter-spacing:-0.108px;z-index:13;">Locations</span>
<span class="t" style="top:953px;line-height:25px;font-size:22.6px;color:#868689;font-weight:700;left:55.35px;letter-spacing:-0.494px;z-index:13;">Tags</span>
<span class="t" style="top:48px;line-height:35px;font-size:30.8px;color:#454545;font-weight:700;left:492.24px;letter-spacing:-0.718px;z-index:13;">Downloads</span>
<span class="t" style="top:133px;line-height:25px;font-size:22.6px;color:#3c3c3c;left:1017.85px;letter-spacing:0.361px;z-index:13;">Downloads</span>
<span class="t" style="top:1555px;line-height:25px;font-size:22.6px;color:#7b7b7b;left:365.95px;letter-spacing:0.505px;-webkit-mask-image:linear-gradient(90deg,#000 93px,transparent 100px);mask-image:linear-gradient(90deg,#000 93px,transparent 100px);">Macintosh</span>
<span class="t" style="top:1555px;line-height:25px;font-size:22.6px;color:#7b7b7b;left:646.15px;letter-spacing:0.361px;">Downloads</span>
<span class="t" style="top:1555px;line-height:25px;font-size:22.6px;color:#7b7b7b;left:828.54px;letter-spacing:0.722px;">adafruit-circuitpython-studiolab_picoexpander-en_GB-20251209-main-PR10737-a8f4738.uf2</span>
</div></div>
<div id="toplayer"><div class="ghost" style="left:-20px;width:62px;border-radius:0"></div><div class="ghost" style="left:286px;width:20px;border-radius:0"></div><div class="ghost" style="left:42px;width:244px;border-radius:0;background:rgba(190,205,250,0.10)"></div>
<span class="t" style="top:740px;line-height:30px;font-size:26.7px;color:rgba(255,255,255,0.30);left:410.81px;letter-spacing:-0.757px;z-index:59;">PR10737-a8f4738.uf2</span>
<span class="t" style="top:743px;line-height:25px;font-size:22.6px;color:rgba(60,60,67,0.80);left:-12.00px;letter-spacing:0.782px;z-index:60;"><span style="letter-spacing:-0.05em">...</span>n-studiolab_picoexpander-en_GB<span style="letter-spacing:-0.05em">...</span></span></div>
</body></html>
